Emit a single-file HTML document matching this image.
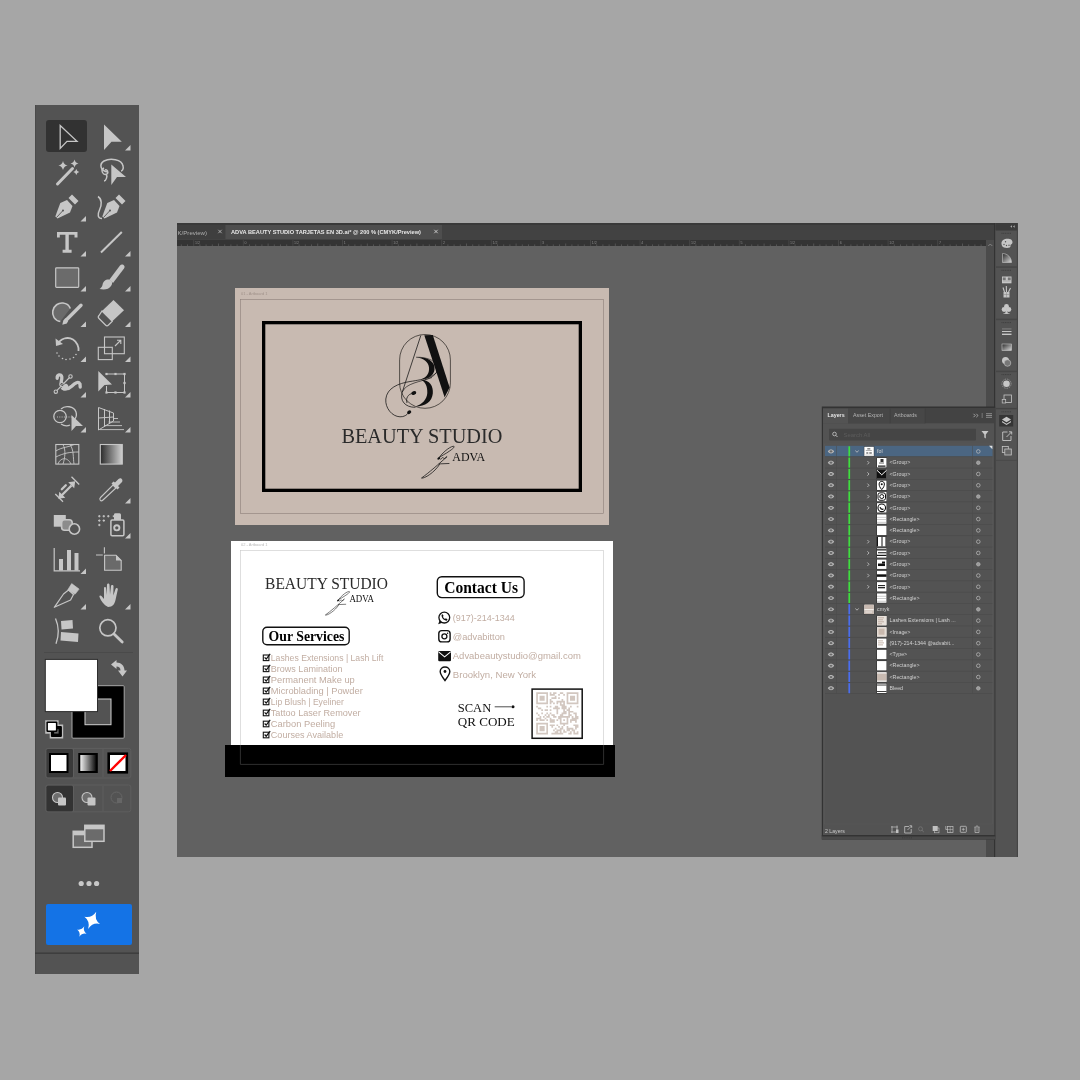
<!DOCTYPE html>
<html><head><meta charset="utf-8"><style>
html,body{margin:0;padding:0;width:1080px;height:1080px;overflow:hidden;background:#a6a6a6}
svg{display:block;will-change:transform}
svg{font-family:"Liberation Sans",sans-serif}
</style></head><body>
<svg width="1080" height="1080" viewBox="0 0 1080 1080">
<rect x="0" y="0" width="1080" height="1080" fill="#a6a6a6"/>
<rect x="35" y="105" width="104" height="869" fill="#535353"/>
<rect x="35" y="105" width="1" height="869" fill="#4a4a4a"/>
<rect x="46" y="120" width="41" height="32" rx="3" fill="#323232"/><path d="M125,150.5 L130.5,150.5 L130.5,145 Z" fill="#c6c6c6"/><path d="M80.5,221.5 L86,221.5 L86,216 Z" fill="#c6c6c6"/><path d="M80.5,256.5 L86,256.5 L86,251 Z" fill="#c6c6c6"/><path d="M125,256.5 L130.5,256.5 L130.5,251 Z" fill="#c6c6c6"/><path d="M80.5,291.5 L86,291.5 L86,286 Z" fill="#c6c6c6"/><path d="M125,291.5 L130.5,291.5 L130.5,286 Z" fill="#c6c6c6"/><path d="M80.5,327.0 L86,327.0 L86,321.5 Z" fill="#c6c6c6"/><path d="M125,327.0 L130.5,327.0 L130.5,321.5 Z" fill="#c6c6c6"/><path d="M80.5,362.0 L86,362.0 L86,356.5 Z" fill="#c6c6c6"/><path d="M125,362.0 L130.5,362.0 L130.5,356.5 Z" fill="#c6c6c6"/><path d="M80.5,397.5 L86,397.5 L86,392 Z" fill="#c6c6c6"/><path d="M125,397.5 L130.5,397.5 L130.5,392 Z" fill="#c6c6c6"/><path d="M80.5,432.5 L86,432.5 L86,427 Z" fill="#c6c6c6"/><path d="M125,432.5 L130.5,432.5 L130.5,427 Z" fill="#c6c6c6"/><path d="M125,503.5 L130.5,503.5 L130.5,498 Z" fill="#c6c6c6"/><path d="M125,538.5 L130.5,538.5 L130.5,533 Z" fill="#c6c6c6"/><path d="M80.5,574.0 L86,574.0 L86,568.5 Z" fill="#c6c6c6"/><path d="M80.5,609.5 L86,609.5 L86,604 Z" fill="#c6c6c6"/><path d="M125,609.5 L130.5,609.5 L130.5,604 Z" fill="#c6c6c6"/><path d="M60.2,125.5 L60.2,148.5 L67,141.4 L77,141.4 Z" fill="none" stroke="#c6c6c6" stroke-width="1.3" stroke-linejoin="miter"/><path d="M104,124.5 L104,150 L111.5,141.8 L121.8,141.8 Z" fill="#c6c6c6"/><path d="M57.5,184 L72.5,168.5" stroke="#c6c6c6" stroke-width="3" stroke-linecap="round"/><path d="M63,160.9 Q63.828,164.672 67.6,165.5 Q63.828,166.328 63,170.1 Q62.172,166.328 58.4,165.5 Q62.172,164.672 63,160.9 Z" fill="#c6c6c6"/><path d="M74.5,159.5 Q75.22,162.78 78.5,163.5 Q75.22,164.22 74.5,167.5 Q73.78,164.22 70.5,163.5 Q73.78,162.78 74.5,159.5 Z" fill="#c6c6c6"/><path d="M76.3,169 Q76.84,171.46 79.3,172 Q76.84,172.54 76.3,175 Q75.75999999999999,172.54 73.3,172 Q75.75999999999999,171.46 76.3,169 Z" fill="#c6c6c6"/><path d="M108,172 C100,171 99,164 104,161 C110,158 122,159 123,166 C124,169 122,171 121,171" fill="none" stroke="#c6c6c6" stroke-width="1.5"/><path d="M104,168 C100,170 103,176 107,174 C109,172 107,169 105,170 M106,174 C108,176 106,181 104,181" fill="none" stroke="#c6c6c6" stroke-width="1.4"/><path d="M111.3,164.5 L111.3,185 L117,177 L126,177 Z" fill="#c6c6c6"/><g transform="translate(0,0)"><path d="M55.3,216.5 L60.3,203 L67,200 L72.5,206 L70,212.5 L57.5,218.5 Z" fill="#c6c6c6"/><path d="M56.5,217.5 L63,210.5" stroke="#535353" stroke-width="0.9"/><circle cx="63" cy="210.5" r="1" fill="#535353"/><path d="M68.5,198 L72,194.5 L78.5,201 L75,204.5 Z" fill="#c6c6c6"/></g><g transform="translate(47,0)"><path d="M55.3,216.5 L60.3,203 L67,200 L72.5,206 L70,212.5 L57.5,218.5 Z" fill="#c6c6c6"/><path d="M56.5,217.5 L63,210.5" stroke="#535353" stroke-width="0.9"/><circle cx="63" cy="210.5" r="1" fill="#535353"/><path d="M68.5,198 L72,194.5 L78.5,201 L75,204.5 Z" fill="#c6c6c6"/></g><path d="M98,196.5 C102,199 102,205 99.5,210 C97,215 98,218.5 102,218.5" fill="none" stroke="#c6c6c6" stroke-width="1.5"/><path d="M57,232 L77.5,232 L77.5,237.5 L74.5,237.5 L74.5,234.7 L68.8,234.7 L68.8,249.8 L71.6,249.8 L71.6,252.7 L62.6,252.7 L62.6,249.8 L65.4,249.8 L65.4,234.7 L59.8,234.7 L59.8,237.5 L57,237.5 Z" fill="#c6c6c6"/><path d="M101,252.5 L121.8,232" stroke="#c6c6c6" stroke-width="2"/><rect x="55.7" y="267.8" width="23" height="19.6" rx="0.8" fill="#6b6b6b" stroke="#c6c6c6" stroke-width="1.2"/><path d="M109.5,279.5 L120,265.5 C122,263 126,265.5 124,268.5 L113,283 Z" fill="#c6c6c6"/><path d="M109.5,279.5 C106,279 103,281 102.5,285 C102,287 100.5,288.5 99.5,289 C104,290 109,289.5 111,286 C112.5,284 112.5,281.5 111,280.5 Z" fill="#c6c6c6"/><path d="M60.3,321.5 C54.5,320.5 52,315.5 52.8,311 C53.8,305.5 58.5,302.5 63,303 C66.5,303.4 69.3,305.5 70.3,308.5" fill="#6a6a6a" stroke="#c6c6c6" stroke-width="1.6"/><path d="M81,305.3 L66.8,319.5" stroke="#c6c6c6" stroke-width="3.4" stroke-linecap="round"/><path d="M65.4,318.1 L68.2,320.9 L66.8,323.4 L62.3,324.7 L63.3,320.4 Z" fill="#c6c6c6"/><path d="M113.5,300 L124,310.2 L112.3,321.3 L102,311 Z" fill="#c6c6c6"/><path d="M102,311 L112.3,321.3 L108.5,325 C107.5,326 106.5,326 105.5,325 L99,318.5 C98,317.5 98,316.5 99,315.5 Z" fill="none" stroke="#c6c6c6" stroke-width="1.2"/><path d="M57.5,345 C60,338 68,336.5 73,339.5 C77,342 79,347 78.5,351" fill="none" stroke="#c6c6c6" stroke-width="1.8"/><path d="M55.5,338.5 L56,346 L63,344 Z" fill="#c6c6c6"/><circle cx="57" cy="353" r="0.8" fill="#c6c6c6"/><circle cx="59" cy="356" r="0.8" fill="#c6c6c6"/><circle cx="62.5" cy="358.5" r="0.8" fill="#c6c6c6"/><circle cx="66" cy="359.5" r="0.8" fill="#c6c6c6"/><circle cx="70" cy="359" r="0.8" fill="#c6c6c6"/><circle cx="73.5" cy="357.5" r="0.8" fill="#c6c6c6"/><circle cx="76" cy="354.5" r="0.8" fill="#c6c6c6"/><rect x="104.5" y="337" width="19.8" height="16.7" fill="none" stroke="#c6c6c6" stroke-width="1.1"/><rect x="98.3" y="347.3" width="14" height="12.3" fill="none" stroke="#c6c6c6" stroke-width="1.1"/><path d="M115,346 L120.5,340.5 M117,340.3 L120.8,340.3 L120.8,344" fill="none" stroke="#c6c6c6" stroke-width="1.1"/><path d="M57.2,378.3 C56.8,374.8 61.3,373.3 61.8,377 C62.2,380.5 60,383 61.3,386.5 C62.8,389.8 68,389.8 72,386 C75,383 78.3,380.8 80,384 L80.2,387" fill="none" stroke="#c6c6c6" stroke-width="3.3" stroke-linecap="round"/><circle cx="64.8" cy="387" r="3.6" fill="#c6c6c6"/><path d="M55.8,391.7 L70.5,376.5" stroke="#535353" stroke-width="2.6"/><path d="M55.8,391.7 L70.5,376.5" stroke="#c6c6c6" stroke-width="1.1"/><circle cx="55.8" cy="391.7" r="1.7" fill="#535353" stroke="#c6c6c6" stroke-width="1.1"/><circle cx="70.5" cy="376.5" r="1.7" fill="#535353" stroke="#c6c6c6" stroke-width="1.1"/><circle cx="62" cy="384.5" r="2.1" fill="#535353" stroke="#c6c6c6" stroke-width="1"/><path d="M60.6,385.9 L63.4,383.1" stroke="#c6c6c6" stroke-width="1"/><path d="M98.3,371 L98.3,391.5 L104.5,385 L112,384.5 Z" fill="#c6c6c6"/><path d="M106.5,374 L124.5,374 L124.5,392.5 L106.5,392.5 L106.5,386" fill="none" stroke="#c6c6c6" stroke-width="1"/><rect x="105.4" y="372.9" width="2.2" height="2.2" fill="#c6c6c6"/><rect x="114.4" y="372.9" width="2.2" height="2.2" fill="#c6c6c6"/><rect x="123.4" y="372.9" width="2.2" height="2.2" fill="#c6c6c6"/><rect x="123.4" y="381.9" width="2.2" height="2.2" fill="#c6c6c6"/><rect x="105.4" y="391.4" width="2.2" height="2.2" fill="#c6c6c6"/><rect x="114.4" y="391.4" width="2.2" height="2.2" fill="#c6c6c6"/><rect x="123.4" y="391.4" width="2.2" height="2.2" fill="#c6c6c6"/><circle cx="60" cy="416.5" r="6.2" fill="none" stroke="#c6c6c6" stroke-width="1.3"/><path d="M61,409 C65,405 74,406 76,412 C77,415 76,418 74,420 M61,424 C64,426 68,426 70,425" fill="none" stroke="#c6c6c6" stroke-width="1.3"/><path d="M57,417 L73,417" stroke="#c6c6c6" stroke-width="0.9" stroke-dasharray="1,1.3"/><path d="M71.5,415 L71.5,431 L76,426 L83,426 Z" fill="#c6c6c6"/><path d="M98.5,407.5 L98.5,430 L113.5,421 L113.5,413 Z M98.5,418 L113.5,417 M104.5,409 L104.5,426.5 M109.5,410.5 L109.5,423.5" fill="none" stroke="#c6c6c6" stroke-width="1"/><path d="M113.5,418.5 L118,418.5" stroke="#c6c6c6" stroke-width="0.9"/><path d="M108.5,422 L120,422" stroke="#c6c6c6" stroke-width="0.9"/><path d="M104,425.6 L122,425.6" stroke="#c6c6c6" stroke-width="0.9"/><path d="M100,429.6 L124,429.6" stroke="#c6c6c6" stroke-width="0.9"/><rect x="55.8" y="444.5" width="23" height="19.6" fill="none" stroke="#c6c6c6" stroke-width="1.1"/><path d="M55.8,451 C62,447 70,447 74,444.5 M55.8,457 C64,453 70,452 78.8,452 M58,464 C60,458 67,456 71,464 M63,444.5 C66,450 65,458 63,464 M70,444.5 C74,450 73,458 74,464" fill="none" stroke="#c6c6c6" stroke-width="0.9"/><defs><linearGradient id="gtool" x1="0" x2="1"><stop offset="0" stop-color="#2a2a2a"/><stop offset="1" stop-color="#d0d0d0"/></linearGradient><linearGradient id="gsw" x1="0" x2="1"><stop offset="0" stop-color="#fff"/><stop offset="1" stop-color="#000"/></linearGradient><linearGradient id="gdark" x1="0" x2="1"><stop offset="0" stop-color="#2a2a2a"/><stop offset="1" stop-color="#e0e0e0"/></linearGradient></defs><rect x="100.3" y="444.5" width="22" height="19.6" fill="url(#gtool)" stroke="#c6c6c6" stroke-width="1.1"/><path d="M55.3,494 L63,501.7 M71.5,476.8 L79.2,484.5" stroke="#c6c6c6" stroke-width="1.3"/><path d="M61.5,495.5 L71.5,485.5" stroke="#c6c6c6" stroke-width="2.3"/><path d="M75.2,481.3 L68.2,482.3 L74.2,488.3 Z M58.3,498.7 L65.3,497.7 L59.3,491.7 Z" fill="#c6c6c6"/><path d="M61.8,489.2 L65.8,485.2" stroke="#c6c6c6" stroke-width="2.3" stroke-linecap="round"/><path d="M103,500 C100.5,502.5 99,499 100.5,497.5 L113,485 L116,488 Z" fill="none" stroke="#c6c6c6" stroke-width="1.1"/><path d="M111.5,483.5 L117.5,489.5 L119.5,487.5 L118,486 L121.5,482.5 C124,480 121,476.5 118.5,479 L115,482.5 L113.5,481.5 Z" fill="#c6c6c6"/><rect x="53.8" y="515" width="12" height="11.7" fill="#c6c6c6"/><rect x="61.6" y="519.7" width="10.6" height="10.5" rx="3" fill="#8c8c8c" stroke="#c6c6c6" stroke-width="1.6"/><circle cx="74.4" cy="529" r="5.2" fill="#535353" stroke="#c6c6c6" stroke-width="1.6"/><path d="M98.1,516.2 h2.4 M99.3,515.0 v2.4" stroke="#c6c6c6" stroke-width="1"/><path d="M102.6,516.2 h2.4 M103.8,515.0 v2.4" stroke="#c6c6c6" stroke-width="1"/><path d="M107.1,516.2 h2.4 M108.3,515.0 v2.4" stroke="#c6c6c6" stroke-width="1"/><path d="M98.1,520.6 h2.4 M99.3,519.4 v2.4" stroke="#c6c6c6" stroke-width="1"/><path d="M102.6,520.6 h2.4 M103.8,519.4 v2.4" stroke="#c6c6c6" stroke-width="1"/><path d="M98.1,525 h2.4 M99.3,523.8 v2.4" stroke="#c6c6c6" stroke-width="1"/><rect x="110.9" y="520" width="13" height="15.7" rx="1.2" fill="none" stroke="#c6c6c6" stroke-width="1.5"/><path d="M114,520 L114,514.5 Q114,513.3 115.5,513.3 L119.5,513.3 Q121,513.3 121,514.8 L121,520 Z M114,515 L112.3,516 L114,517.5 Z" fill="#c6c6c6"/><circle cx="116.8" cy="527.8" r="2.6" fill="none" stroke="#c6c6c6" stroke-width="1.9"/><path d="M54.2,548 L54.2,570.8 L80,570.8" fill="none" stroke="#c6c6c6" stroke-width="1.2"/><rect x="59" y="559" width="4" height="11.5" fill="#c6c6c6"/><rect x="67" y="550" width="4" height="20.5" fill="#c6c6c6"/><rect x="74.5" y="553" width="4" height="17.5" fill="#c6c6c6"/><path d="M104.4,547.3 L104.4,553.4 M96,555 L102.8,555" stroke="#c6c6c6" stroke-width="1.1"/><path d="M104.6,555.2 L116,555.2 L121.2,560.5 L121.2,570.3 L104.6,570.3 Z" fill="#6a6a6a" stroke="#c6c6c6" stroke-width="1.1"/><path d="M116,555 L116,560.5 L121.5,560.5 Z" fill="#c6c6c6"/><path d="M54.3,607.3 L63.5,594 L68.5,590 L73.5,594.5 L70.6,600 Z" fill="none" stroke="#c6c6c6" stroke-width="1.2" stroke-linejoin="round"/><path d="M71.7,583.6 L79.1,589.1 L75,594.3 L67.8,589.8 Z" fill="#c6c6c6" stroke="#c6c6c6" stroke-width="0.6" stroke-linejoin="round"/><path d="M108,607 C104,605 101,601 99.5,597 C99,595.5 100.5,595 101.5,596 L104,599 L104,588 C104,586.5 106,586.5 106,588 L106.5,595 L107,585 C107,583 109.5,583 109.5,585 L110,594.5 L111,586 C111,584.5 113.5,584.5 113.5,586 L113.3,595.5 L115.5,589 C116,587.5 118,588 117.8,589.5 L115.5,600 C114.5,604 113,607 108,607 Z" fill="#c6c6c6"/><path d="M55.5,618.5 C58.8,626 58.8,636 56,643.8" fill="none" stroke="#c6c6c6" stroke-width="1.3"/><path d="M61,621 L72.5,620 L73,628.5 L61.5,629.5 Z M61,632 L78.5,633.5 L78,642 L60.5,640.5 Z" fill="#c6c6c6"/><circle cx="107.9" cy="627.8" r="8.1" fill="none" stroke="#c6c6c6" stroke-width="1.7"/><path d="M114,634 L122.2,642" stroke="#c6c6c6" stroke-width="2.8" stroke-linecap="round"/><rect x="44" y="652" width="89" height="1" fill="#4a4a4a"/><rect x="72" y="685.7" width="52.2" height="52.5" rx="1" fill="#000" stroke="#a8a8a8" stroke-width="1"/><rect x="85" y="699" width="26" height="25.7" fill="#535353" stroke="#d0d0d0" stroke-width="1"/><rect x="45.3" y="659.4" width="52.2" height="52.2" fill="#fff" stroke="#2e2e2e" stroke-width="1"/><path d="M111,664.5 L116.5,660 L116.5,662.5 C121,662.5 124.5,665.5 124.5,670.5 L127,670.5 L122.5,676.5 L118,670.5 L120.5,670.5 C120.5,668 119,666.5 116.5,666.5 L116.5,669 Z" fill="#c6c6c6"/><path d="M45.2,720.2 L58.6,720.2 L58.6,724.6 L63.2,724.6 L63.2,738.4 L49.7,738.4 L49.7,733.7 L45.2,733.7 Z" fill="#bdbdbd"/><rect x="50.9" y="725.9" width="11" height="11" rx="1" fill="#000"/><rect x="54.2" y="729.2" width="4.4" height="4.4" fill="#666"/><rect x="46.4" y="721.4" width="11" height="10.6" rx="1.2" fill="#000"/><rect x="47.9" y="722.9" width="8" height="7.6" rx="0.4" fill="#fff"/><rect x="45.8" y="748.4" width="85" height="29.6" rx="2" fill="none" stroke="#5e5e5e" stroke-width="1"/><rect x="46.5" y="749" width="26.5" height="28.3" rx="1.5" fill="#3a3a3a"/><rect x="73" y="749" width="1" height="28.3" fill="#5e5e5e"/><rect x="102.5" y="749" width="1" height="28.3" fill="#5e5e5e"/><rect x="50" y="754" width="17.5" height="18" fill="#fff" stroke="#000" stroke-width="2"/><rect x="79.3" y="754" width="17.5" height="18" fill="url(#gsw)" stroke="#000" stroke-width="2"/><rect x="109" y="754" width="17.5" height="18" fill="#fff" stroke="#000" stroke-width="2"/><path d="M110,771 L126,755" stroke="#ff0000" stroke-width="2.4"/><rect x="108" y="753" width="19.5" height="20" fill="none" stroke="#000" stroke-width="1.2"/><rect x="45.8" y="785" width="85" height="26.8" rx="2" fill="none" stroke="#5e5e5e" stroke-width="1"/><rect x="46.5" y="785.7" width="26.5" height="25.5" rx="1.5" fill="#333"/><rect x="73" y="785.7" width="1" height="25.5" fill="#5e5e5e"/><rect x="102.5" y="785.7" width="1" height="25.5" fill="#5e5e5e"/><circle cx="57.5" cy="797.5" r="5" fill="#6e6e6e" stroke="#c6c6c6" stroke-width="1.1"/><rect x="58" y="797.5" width="8" height="8" rx="1" fill="#c6c6c6"/><circle cx="87.0" cy="797.5" r="5" fill="#6e6e6e" stroke="#c6c6c6" stroke-width="1.1"/><rect x="87.5" y="797.5" width="8" height="8" rx="1" fill="#c6c6c6"/><circle cx="116.5" cy="797.5" r="5.5" fill="none" stroke="#666" stroke-width="1"/><rect x="117" y="798" width="5" height="5" fill="#666"/><rect x="73.2" y="831.3" width="18.8" height="16" fill="#6b6b6b" stroke="#c6c6c6" stroke-width="1.5"/><rect x="73.2" y="831.3" width="18.8" height="4" fill="#c6c6c6"/><rect x="84.8" y="825.3" width="19.2" height="16" fill="#6b6b6b" stroke="#c6c6c6" stroke-width="1.5"/><rect x="84.8" y="825.3" width="19.2" height="4" fill="#c6c6c6"/><circle cx="81.2" cy="883.5" r="2.6" fill="#c8c8c8"/><circle cx="89" cy="883.5" r="2.6" fill="#c8c8c8"/><circle cx="96.6" cy="883.5" r="2.6" fill="#c8c8c8"/><rect x="46" y="904" width="86" height="41" rx="2" fill="#1473e6"/><path transform="rotate(25 92.2 920.3)" d="M92.2,910.8 Q93.49000000000001,918.875 100.8,920.3 Q93.49000000000001,921.7249999999999 92.2,929.8 Q90.91,921.7249999999999 83.60000000000001,920.3 Q90.91,918.875 92.2,910.8 Z" fill="#fff"/><path transform="rotate(25 81.8 931.6)" d="M81.8,925.8000000000001 Q82.58,930.73 87.0,931.6 Q82.58,932.47 81.8,937.4 Q81.02,932.47 76.6,931.6 Q81.02,930.73 81.8,925.8000000000001 Z" fill="#fff"/><rect x="35" y="952.5" width="104" height="1.3" fill="#3a3a3a"/>
<rect x="177" y="223" width="841" height="634" fill="#616161"/><rect x="177" y="223" width="818" height="17" fill="#424242"/><rect x="177" y="223" width="818" height="2" fill="#393939"/><rect x="177" y="225" width="48.5" height="14" fill="#3f3f3f"/><rect x="225.5" y="225" width="216.5" height="14" fill="#4e4e4e"/><text x="207" y="234.5" font-size="6.1" fill="#b0b0b0" text-anchor="end">K/Preview)</text><path d="M218.3,229.8 L221.7,233.2 M221.7,229.8 L218.3,233.2" stroke="#c0c0c0" stroke-width="0.8"/><text x="231" y="234.3" font-size="5.6" font-weight="bold" fill="#e8e8e8" textLength="190" lengthAdjust="spacingAndGlyphs">ADVA BEAUTY STUDIO TARJETAS EN 3D.ai* @ 200 % (CMYK/Preview)</text><path d="M434.3,229.8 L437.7,233.2 M437.7,229.8 L434.3,233.2" stroke="#d0d0d0" stroke-width="0.9"/><rect x="177" y="240" width="809" height="6" fill="#343434"/><path d="M181.30,244.4 L181.30,246 M187.50,244.4 L187.50,246 M199.90,244.4 L199.90,246 M206.10,244.4 L206.10,246 M212.30,244.4 L212.30,246 M218.50,243.5 L218.50,246 M224.70,244.4 L224.70,246 M230.90,244.4 L230.90,246 M237.10,244.4 L237.10,246 M249.50,244.4 L249.50,246 M255.70,244.4 L255.70,246 M261.90,244.4 L261.90,246 M268.10,243.5 L268.10,246 M274.30,244.4 L274.30,246 M280.50,244.4 L280.50,246 M286.70,244.4 L286.70,246 M299.10,244.4 L299.10,246 M305.30,244.4 L305.30,246 M311.50,244.4 L311.50,246 M317.70,243.5 L317.70,246 M323.90,244.4 L323.90,246 M330.10,244.4 L330.10,246 M336.30,244.4 L336.30,246 M348.70,244.4 L348.70,246 M354.90,244.4 L354.90,246 M361.10,244.4 L361.10,246 M367.30,243.5 L367.30,246 M373.50,244.4 L373.50,246 M379.70,244.4 L379.70,246 M385.90,244.4 L385.90,246 M398.30,244.4 L398.30,246 M404.50,244.4 L404.50,246 M410.70,244.4 L410.70,246 M416.90,243.5 L416.90,246 M423.10,244.4 L423.10,246 M429.30,244.4 L429.30,246 M435.50,244.4 L435.50,246 M447.90,244.4 L447.90,246 M454.10,244.4 L454.10,246 M460.30,244.4 L460.30,246 M466.50,243.5 L466.50,246 M472.70,244.4 L472.70,246 M478.90,244.4 L478.90,246 M485.10,244.4 L485.10,246 M497.50,244.4 L497.50,246 M503.70,244.4 L503.70,246 M509.90,244.4 L509.90,246 M516.10,243.5 L516.10,246 M522.30,244.4 L522.30,246 M528.50,244.4 L528.50,246 M534.70,244.4 L534.70,246 M547.10,244.4 L547.10,246 M553.30,244.4 L553.30,246 M559.50,244.4 L559.50,246 M565.70,243.5 L565.70,246 M571.90,244.4 L571.90,246 M578.10,244.4 L578.10,246 M584.30,244.4 L584.30,246 M596.70,244.4 L596.70,246 M602.90,244.4 L602.90,246 M609.10,244.4 L609.10,246 M615.30,243.5 L615.30,246 M621.50,244.4 L621.50,246 M627.70,244.4 L627.70,246 M633.90,244.4 L633.90,246 M646.30,244.4 L646.30,246 M652.50,244.4 L652.50,246 M658.70,244.4 L658.70,246 M664.90,243.5 L664.90,246 M671.10,244.4 L671.10,246 M677.30,244.4 L677.30,246 M683.50,244.4 L683.50,246 M695.90,244.4 L695.90,246 M702.10,244.4 L702.10,246 M708.30,244.4 L708.30,246 M714.50,243.5 L714.50,246 M720.70,244.4 L720.70,246 M726.90,244.4 L726.90,246 M733.10,244.4 L733.10,246 M745.50,244.4 L745.50,246 M751.70,244.4 L751.70,246 M757.90,244.4 L757.90,246 M764.10,243.5 L764.10,246 M770.30,244.4 L770.30,246 M776.50,244.4 L776.50,246 M782.70,244.4 L782.70,246 M795.10,244.4 L795.10,246 M801.30,244.4 L801.30,246 M807.50,244.4 L807.50,246 M813.70,243.5 L813.70,246 M819.90,244.4 L819.90,246 M826.10,244.4 L826.10,246 M832.30,244.4 L832.30,246 M844.70,244.4 L844.70,246 M850.90,244.4 L850.90,246 M857.10,244.4 L857.10,246 M863.30,243.5 L863.30,246 M869.50,244.4 L869.50,246 M875.70,244.4 L875.70,246 M881.90,244.4 L881.90,246 M894.30,244.4 L894.30,246 M900.50,244.4 L900.50,246 M906.70,244.4 L906.70,246 M912.90,243.5 L912.90,246 M919.10,244.4 L919.10,246 M925.30,244.4 L925.30,246 M931.50,244.4 L931.50,246 M943.90,244.4 L943.90,246 M950.10,244.4 L950.10,246 M956.30,244.4 L956.30,246 M962.50,243.5 L962.50,246 M968.70,244.4 L968.70,246 M974.90,244.4 L974.90,246 M981.10,244.4 L981.10,246" stroke="#6a6a6a" stroke-width="0.6"/><path d="M193.70,240 L193.70,246 M243.30,240 L243.30,246 M292.90,240 L292.90,246 M342.50,240 L342.50,246 M392.10,240 L392.10,246 M441.70,240 L441.70,246 M491.30,240 L491.30,246 M540.90,240 L540.90,246 M590.50,240 L590.50,246 M640.10,240 L640.10,246 M689.70,240 L689.70,246 M739.30,240 L739.30,246 M788.90,240 L788.90,246 M838.50,240 L838.50,246 M888.10,240 L888.10,246 M937.70,240 L937.70,246" stroke="#505050" stroke-width="0.6"/><text x="194.90" y="244.2" font-size="3.6" fill="#8a8a8a">1/2</text><text x="244.50" y="244.2" font-size="3.6" fill="#8a8a8a">0</text><text x="294.10" y="244.2" font-size="3.6" fill="#8a8a8a">1/2</text><text x="343.70" y="244.2" font-size="3.6" fill="#8a8a8a">1</text><text x="393.30" y="244.2" font-size="3.6" fill="#8a8a8a">1/2</text><text x="442.90" y="244.2" font-size="3.6" fill="#8a8a8a">2</text><text x="492.50" y="244.2" font-size="3.6" fill="#8a8a8a">1/2</text><text x="542.10" y="244.2" font-size="3.6" fill="#8a8a8a">3</text><text x="591.70" y="244.2" font-size="3.6" fill="#8a8a8a">1/2</text><text x="641.30" y="244.2" font-size="3.6" fill="#8a8a8a">4</text><text x="690.90" y="244.2" font-size="3.6" fill="#8a8a8a">1/2</text><text x="740.50" y="244.2" font-size="3.6" fill="#8a8a8a">5</text><text x="790.10" y="244.2" font-size="3.6" fill="#8a8a8a">1/2</text><text x="839.70" y="244.2" font-size="3.6" fill="#8a8a8a">6</text><text x="889.30" y="244.2" font-size="3.6" fill="#8a8a8a">1/2</text><text x="938.90" y="244.2" font-size="3.6" fill="#8a8a8a">7</text><rect x="986" y="240" width="8.5" height="617" fill="#4b4b4b"/><path d="M988.3,246 L990.3,244 L992.3,246" fill="none" stroke="#9a9a9a" stroke-width="0.7"/><rect x="994" y="223" width="1.4" height="634" fill="#333"/><rect x="995.4" y="223" width="22.6" height="634" fill="#4b4b4b"/><rect x="995.4" y="223" width="22.6" height="7.3" fill="#3c3c3c"/><path d="M1010.3,226.5 L1012,225.3 L1012,227.7 Z M1013,226.5 L1014.7,225.3 L1014.7,227.7 Z" fill="#aaa"/><rect x="1017" y="223" width="1" height="634" fill="#444"/><rect x="996" y="231" width="20.8" height="36" fill="#535353"/><rect x="996" y="266.4" width="20.8" height="1" fill="#434343"/><path d="M1001.5,233.3 L1011.5,233.3" stroke="#3e3e3e" stroke-width="1" stroke-dasharray="1,0.7"/><rect x="996" y="268" width="20.8" height="51.30000000000001" fill="#535353"/><rect x="996" y="318.7" width="20.8" height="1" fill="#434343"/><path d="M1001.5,270.3 L1011.5,270.3" stroke="#3e3e3e" stroke-width="1" stroke-dasharray="1,0.7"/><rect x="996" y="320.3" width="20.8" height="51.0" fill="#535353"/><rect x="996" y="370.7" width="20.8" height="1" fill="#434343"/><path d="M1001.5,322.6 L1011.5,322.6" stroke="#3e3e3e" stroke-width="1" stroke-dasharray="1,0.7"/><rect x="996" y="372.3" width="20.8" height="36.19999999999999" fill="#535353"/><rect x="996" y="407.9" width="20.8" height="1" fill="#434343"/><path d="M1001.5,374.6 L1011.5,374.6" stroke="#3e3e3e" stroke-width="1" stroke-dasharray="1,0.7"/><rect x="996" y="409.5" width="20.8" height="51.0" fill="#535353"/><rect x="996" y="459.9" width="20.8" height="1" fill="#434343"/><path d="M1001.5,411.8 L1011.5,411.8" stroke="#3e3e3e" stroke-width="1" stroke-dasharray="1,0.7"/><rect x="996" y="460.5" width="20.8" height="396.5" fill="#535353"/><path d="M1001.5,244 C1001,240 1005,238.3 1008.5,238.7 C1012,239 1013,241.5 1012.3,243.3 C1011.8,244.3 1010,244.5 1010.5,246 C1011,247.5 1008,248.3 1005,247.8 C1002.5,247.4 1001.8,245.8 1001.5,244 Z" fill="#c6c6c6"/><circle cx="1004" cy="244.5" r="0.7" fill="#535353"/><circle cx="1006.5" cy="245.5" r="0.7" fill="#535353"/><circle cx="1009" cy="245.3" r="0.7" fill="#535353"/><circle cx="1005.5" cy="241.7" r="0.7" fill="#535353"/><defs><linearGradient id="qg" x1="0" y1="0" x2="1" y2="1"><stop offset="0" stop-color="#2a2a2a"/><stop offset="1" stop-color="#d8d8d8"/></linearGradient></defs><path d="M1002.5,253.5 L1002.5,262.5 L1011.5,262.5 C1011.5,257.5 1007.5,253.5 1002.5,253.5 Z" fill="url(#qg)" stroke="#c6c6c6" stroke-width="0.6"/><rect x="1002" y="276.5" width="9.5" height="6.8" fill="#c6c6c6"/><path d="M1003,277.7 h2.5 v2.2 h-2.5 Z M1008,277.7 h2.5 v2.2 h-2.5 Z M1003,281 h7.5" fill="#777" stroke="#777" stroke-width="0.4"/><rect x="1003.5" y="292" width="6" height="5.5" fill="#c6c6c6"/><path d="M1004.5,292 L1003,287.5 M1006.5,292 L1006.3,286 M1008.5,292 L1010.5,288" stroke="#c6c6c6" stroke-width="1.1"/><path d="M1003.5,294.5 h6 M1006.5,292 v5.5" stroke="#777" stroke-width="0.4"/><circle cx="1006.5" cy="306.3" r="2.4" fill="#c6c6c6"/><circle cx="1004.1" cy="309.5" r="2.4" fill="#c6c6c6"/><circle cx="1008.9" cy="309.5" r="2.4" fill="#c6c6c6"/><path d="M1006.5,308 L1005.5,313.5 L1007.5,313.5 Z M1003.5,313.5 h6" stroke="#c6c6c6" stroke-width="0.7" fill="#c6c6c6"/><rect x="1002" y="328.3" width="9.5" height="1.2" fill="#7a7a7a"/><rect x="1002" y="331" width="9.5" height="1" fill="#c6c6c6"/><rect x="1002" y="333.6" width="9.5" height="1.4" fill="#c6c6c6"/><rect x="1002" y="344" width="9.5" height="6.5" fill="url(#qg)" stroke="#c6c6c6" stroke-width="0.6"/><circle cx="1005.5" cy="360.5" r="3.5" fill="#c6c6c6"/><circle cx="1007.5" cy="363" r="3.3" fill="#777" stroke="#c6c6c6" stroke-width="0.6"/><circle cx="1006.5" cy="383.7" r="3.3" fill="#c6c6c6"/><circle cx="1006.5" cy="383.7" r="4.6" fill="none" stroke="#c6c6c6" stroke-width="0.7" stroke-dasharray="0.8,1"/><rect x="1004" y="395" width="7.5" height="7.5" fill="none" stroke="#c6c6c6" stroke-width="0.8"/><rect x="1002.2" y="399.5" width="3.5" height="3.5" fill="#535353" stroke="#c6c6c6" stroke-width="0.7"/><rect x="999.2" y="415" width="14" height="11.5" fill="#353535"/><path d="M1006.5,416.8 L1011,419.5 L1006.5,422.2 L1002,419.5 Z" fill="#c6c6c6"/><path d="M1002,421 L1006.5,423.7 L1011,421 L1011,422.3 L1006.5,425 L1002,422.3 Z" fill="#c6c6c6"/><path d="M1007.5,432 L1002.7,432 L1002.7,440.5 L1011,440.5 L1011,436" fill="none" stroke="#c6c6c6" stroke-width="0.9"/><path d="M1006.5,437 L1011.5,432 M1009,431.8 L1011.7,431.8 L1011.7,434.5" fill="none" stroke="#c6c6c6" stroke-width="0.9"/><rect x="1002.3" y="446.5" width="6" height="6" fill="none" stroke="#c6c6c6" stroke-width="0.8"/><rect x="1004.8" y="449" width="6.5" height="6" fill="#666" stroke="#c6c6c6" stroke-width="0.8"/>
<rect x="235" y="288" width="374" height="237" fill="#c8bab1"/><text x="241" y="294.8" font-size="4" fill="#a0928a">01 - Artboard 1</text><rect x="240.5" y="299.5" width="363" height="214" fill="none" stroke="#8c7f78" stroke-width="0.6"/><rect x="263.65" y="322.65" width="316.7" height="167.7" fill="none" stroke="#000" stroke-width="3.3"/><rect x="399.6" y="334.5" width="50.8" height="73.8" rx="25.4" ry="25.4" fill="none" stroke="#2e2926" stroke-width="0.75"/><path d="M424.3,335.3 L432.8,334.9 L449.6,387.5 L444.6,397.2 Z" fill="#111"/><path d="M420.8,335.5 L402.3,392" stroke="#111" stroke-width="0.75"/><path d="M416,357.2 C427,356.5 435.3,361 434.5,369.5 C434,375 429,378.8 421.5,379.3 C427,377 429.5,373 429,367.5 C428.5,362 424,358.3 416,357.2 Z" fill="#111"/><path d="M416,357.2 C428,357 437.5,361 437.3,369 C437.2,374 432,378 425,379.5" fill="none" stroke="#111" stroke-width="0.55"/><path d="M421,379.8 C430,380 433.5,386.5 432.8,393.5 C432,401.5 425.5,406.5 415.5,406.5 C422,404.5 427,399.5 427.3,393 C427.6,386.5 425.5,382 421,379.8 Z" fill="#111"/><path d="M438,369 C437,376.5 424,379.5 410,381.5 C398,383.5 387,388 385.8,399 C385,408 392,416.5 400,416.8 C404,417 407,415 408.5,412.8" fill="none" stroke="#111" stroke-width="0.75"/><path d="M432,377.5 C420,382 406,383 402.3,392" fill="none" stroke="#111" stroke-width="0.65"/><path d="M402.3,392 C399.5,400.5 405,407.5 415.5,407.3" fill="none" stroke="#111" stroke-width="0.75"/><path d="M413,393.3 C408,393.8 405.5,398.5 407,403" fill="none" stroke="#111" stroke-width="0.75"/><ellipse cx="413.8" cy="393" rx="2.5" ry="1.9" transform="rotate(-15 413.8 393)" fill="#111"/><ellipse cx="409.2" cy="412.2" rx="2.2" ry="1.7" transform="rotate(-35 409.2 412.2)" fill="#111"/><text x="341.4" y="443.1" font-size="22" style="font-family:'Liberation Serif',serif" fill="#2a2a2a" textLength="161" lengthAdjust="spacingAndGlyphs">BEAUTY STUDIO</text><text x="452.3" y="461.1" font-size="12.7" style="font-family:'Liberation Serif',serif" fill="#111" textLength="32.9" lengthAdjust="spacingAndGlyphs">ADVA</text><path d="M438.30,458.80 C441.00,454.00 449.00,447.00 453.00,446.30 C456.00,446.00 454.00,449.00 439.80,457.00 M440.80,459.30 C442.00,457.50 443.00,457.00 443.50,458.20 C444.00,459.20 445.00,458.30 446.80,456.80 M446.80,456.80 C440.00,463.00 428.00,473.50 421.50,478.00 C424.00,479.00 434.50,472.50 439.50,464.50 M439.20,463.90 L449.00,463.50" fill="none" stroke="#111" stroke-width="0.75" stroke-linecap="round"/><ellipse cx="438.80" cy="458.30" rx="1.60" ry="1.10" transform="rotate(-35 438.80 458.30)" fill="#111"/><rect x="231" y="541" width="382" height="204" fill="#ffffff"/><text x="241" y="546.3" font-size="4" fill="#b8b8b8">02 - Artboard 1</text><rect x="240.4" y="550.3" width="363.2" height="214.1" fill="none" stroke="#c9c9c9" stroke-width="0.6"/><rect x="225" y="745" width="390" height="32" fill="#000"/><path d="M240.4,745 L240.4,764.4 L603.6,764.4 L603.6,745" fill="none" stroke="#4e4e4e" stroke-width="0.6"/><text x="265.1" y="588.6" font-size="16.6" style="font-family:'Liberation Serif',serif" fill="#2a2a2a" textLength="122.8" lengthAdjust="spacingAndGlyphs">BEAUTY STUDIO</text><text x="349.4" y="601.9" font-size="9.8" style="font-family:'Liberation Serif',serif" fill="#111" textLength="24.6" lengthAdjust="spacingAndGlyphs">ADVA</text><path d="M337.80,600.79 C339.80,597.24 345.72,592.06 348.68,591.54 C350.90,591.32 349.42,593.54 338.91,599.46 M339.65,601.16 C340.54,599.83 341.28,599.46 341.65,600.35 C342.02,601.09 342.76,600.42 344.09,599.31 M344.09,599.31 C339.06,603.90 330.18,611.67 325.37,615.00 C327.22,615.74 334.99,610.93 338.69,605.01 M338.47,604.57 L345.72,604.27" fill="none" stroke="#111" stroke-width="0.55" stroke-linecap="round"/><ellipse cx="338.17" cy="600.42" rx="1.18" ry="0.81" transform="rotate(-35 338.17 600.42)" fill="#111"/><rect x="262.8" y="627.3" width="86.4" height="17.4" rx="4.2" fill="none" stroke="#111" stroke-width="1.4"/><text x="268.6" y="640.8" font-size="14.8" font-weight="bold" style="font-family:'Liberation Serif',serif" fill="#000" textLength="75.8" lengthAdjust="spacingAndGlyphs">Our Services</text><rect x="263.3" y="655.00" width="5.6" height="5.6" fill="none" stroke="#111" stroke-width="1.1"/><path d="M264.6,657.30 L266.2,659.00 L270.2,653.80" fill="none" stroke="#111" stroke-width="1.2"/><text x="270.8" y="660.60" font-size="9" style="font-family:'Liberation Sans',sans-serif" fill="#c1ada2" textLength="112.5" lengthAdjust="spacingAndGlyphs">Lashes Extensions | Lash Lift</text><rect x="263.3" y="666.03" width="5.6" height="5.6" fill="none" stroke="#111" stroke-width="1.1"/><path d="M264.6,668.33 L266.2,670.03 L270.2,664.83" fill="none" stroke="#111" stroke-width="1.2"/><text x="270.8" y="671.63" font-size="9" style="font-family:'Liberation Sans',sans-serif" fill="#c1ada2" textLength="71.7" lengthAdjust="spacingAndGlyphs">Brows Lamination</text><rect x="263.3" y="677.06" width="5.6" height="5.6" fill="none" stroke="#111" stroke-width="1.1"/><path d="M264.6,679.36 L266.2,681.06 L270.2,675.86" fill="none" stroke="#111" stroke-width="1.2"/><text x="270.8" y="682.66" font-size="9" style="font-family:'Liberation Sans',sans-serif" fill="#c1ada2" textLength="84" lengthAdjust="spacingAndGlyphs">Permanent Make up</text><rect x="263.3" y="688.09" width="5.6" height="5.6" fill="none" stroke="#111" stroke-width="1.1"/><path d="M264.6,690.39 L266.2,692.09 L270.2,686.89" fill="none" stroke="#111" stroke-width="1.2"/><text x="270.8" y="693.69" font-size="9" style="font-family:'Liberation Sans',sans-serif" fill="#c1ada2" textLength="92" lengthAdjust="spacingAndGlyphs">Microblading | Powder</text><rect x="263.3" y="699.12" width="5.6" height="5.6" fill="none" stroke="#111" stroke-width="1.1"/><path d="M264.6,701.42 L266.2,703.12 L270.2,697.92" fill="none" stroke="#111" stroke-width="1.2"/><text x="270.8" y="704.72" font-size="9" style="font-family:'Liberation Sans',sans-serif" fill="#c1ada2" textLength="73" lengthAdjust="spacingAndGlyphs">Lip Blush | Eyeliner</text><rect x="263.3" y="710.15" width="5.6" height="5.6" fill="none" stroke="#111" stroke-width="1.1"/><path d="M264.6,712.45 L266.2,714.15 L270.2,708.95" fill="none" stroke="#111" stroke-width="1.2"/><text x="270.8" y="715.75" font-size="9" style="font-family:'Liberation Sans',sans-serif" fill="#c1ada2" textLength="89.7" lengthAdjust="spacingAndGlyphs">Tattoo Laser Remover</text><rect x="263.3" y="721.18" width="5.6" height="5.6" fill="none" stroke="#111" stroke-width="1.1"/><path d="M264.6,723.48 L266.2,725.18 L270.2,719.98" fill="none" stroke="#111" stroke-width="1.2"/><text x="270.8" y="726.78" font-size="9" style="font-family:'Liberation Sans',sans-serif" fill="#c1ada2" textLength="64.3" lengthAdjust="spacingAndGlyphs">Carbon Peeling</text><rect x="263.3" y="732.21" width="5.6" height="5.6" fill="none" stroke="#111" stroke-width="1.1"/><path d="M264.6,734.51 L266.2,736.21 L270.2,731.01" fill="none" stroke="#111" stroke-width="1.2"/><text x="270.8" y="737.81" font-size="9" style="font-family:'Liberation Sans',sans-serif" fill="#c1ada2" textLength="72.4" lengthAdjust="spacingAndGlyphs">Courses Available</text><rect x="437.3" y="576.7" width="86.8" height="20.9" rx="4.5" fill="none" stroke="#111" stroke-width="1.4"/><text x="444.2" y="592.8" font-size="17.5" font-weight="bold" style="font-family:'Liberation Serif',serif" fill="#000" textLength="73.9" lengthAdjust="spacingAndGlyphs">Contact Us</text><text x="452.8" y="620.7" font-size="9.9" style="font-family:'Liberation Sans',sans-serif" fill="#c1ada2" textLength="61.9" lengthAdjust="spacingAndGlyphs">(917)-214-1344</text><text x="452.8" y="639.7" font-size="9.9" style="font-family:'Liberation Sans',sans-serif" fill="#c1ada2" textLength="52.2" lengthAdjust="spacingAndGlyphs">@advabitton</text><text x="452.8" y="658.9" font-size="9.9" style="font-family:'Liberation Sans',sans-serif" fill="#c1ada2" textLength="128" lengthAdjust="spacingAndGlyphs">Advabeautystudio@gmail.com</text><text x="452.8" y="678.3" font-size="9.9" style="font-family:'Liberation Sans',sans-serif" fill="#c1ada2" textLength="83.2" lengthAdjust="spacingAndGlyphs">Brooklyn, New York</text><circle cx="444.3" cy="617.6" r="5.4" fill="none" stroke="#111" stroke-width="1.3"/><path d="M438.2,624.3 L439.6,620.3 L442.3,622.8 Z" fill="#111"/><path d="M441.6,614.8 C441.2,617.5 443.5,620.5 446.8,620.7 L447.5,619.3 L445.8,618.3 L445,619 C444,618.5 443.3,617.6 442.9,616.7 L443.6,616 L442.7,614.3 Z" fill="#111"/><rect x="438.8" y="630.6" width="11.3" height="11.3" rx="3" fill="none" stroke="#111" stroke-width="1.4"/><circle cx="444.4" cy="636.3" r="2.5" fill="none" stroke="#111" stroke-width="1.3"/><circle cx="447.6" cy="633.2" r="0.7" fill="#111"/><rect x="438.2" y="651" width="12.8" height="10.3" rx="1.2" fill="#111"/><path d="M438.6,651.8 L444.6,656.8 L450.6,651.8" fill="none" stroke="#fff" stroke-width="1.1"/><path d="M445,680.5 C441.5,676 440.2,673.5 440.2,671.5 C440.2,668.7 442.4,667 445,667 C447.6,667 449.8,668.7 449.8,671.5 C449.8,673.5 448.5,676 445,680.5 Z" fill="none" stroke="#111" stroke-width="1.4"/><circle cx="445" cy="671.5" r="1.4" fill="#111"/><text x="457.8" y="711.8" font-size="13.2" style="font-family:'Liberation Serif',serif" fill="#111" textLength="33.4" lengthAdjust="spacingAndGlyphs">SCAN</text><text x="457.8" y="725.6" font-size="13.2" style="font-family:'Liberation Serif',serif" fill="#111" textLength="57" lengthAdjust="spacingAndGlyphs">QR CODE</text><path d="M494.7,706.8 L511.5,706.8" stroke="#222" stroke-width="0.8"/><circle cx="513" cy="706.8" r="1.5" fill="#111"/><rect x="532.1" y="689.1" width="50.1" height="49.2" fill="#fff" stroke="#111" stroke-width="1.5"/><path d="M536.20,692.30h1.69v1.69h-1.69zM537.89,692.30h1.69v1.69h-1.69zM539.58,692.30h1.69v1.69h-1.69zM541.27,692.30h1.69v1.69h-1.69zM542.96,692.30h1.69v1.69h-1.69zM544.65,692.30h1.69v1.69h-1.69zM546.34,692.30h1.69v1.69h-1.69zM549.72,692.30h1.69v1.69h-1.69zM553.10,692.30h1.69v1.69h-1.69zM554.79,692.30h1.69v1.69h-1.69zM559.86,692.30h1.69v1.69h-1.69zM561.55,692.30h1.69v1.69h-1.69zM566.62,692.30h1.69v1.69h-1.69zM568.31,692.30h1.69v1.69h-1.69zM570.00,692.30h1.69v1.69h-1.69zM571.69,692.30h1.69v1.69h-1.69zM573.38,692.30h1.69v1.69h-1.69zM575.07,692.30h1.69v1.69h-1.69zM576.76,692.30h1.69v1.69h-1.69zM536.20,693.99h1.69v1.69h-1.69zM546.34,693.99h1.69v1.69h-1.69zM549.72,693.99h1.69v1.69h-1.69zM551.41,693.99h1.69v1.69h-1.69zM553.10,693.99h1.69v1.69h-1.69zM558.17,693.99h1.69v1.69h-1.69zM563.24,693.99h1.69v1.69h-1.69zM566.62,693.99h1.69v1.69h-1.69zM576.76,693.99h1.69v1.69h-1.69zM536.20,695.68h1.69v1.69h-1.69zM539.58,695.68h1.69v1.69h-1.69zM541.27,695.68h1.69v1.69h-1.69zM542.96,695.68h1.69v1.69h-1.69zM546.34,695.68h1.69v1.69h-1.69zM554.79,695.68h1.69v1.69h-1.69zM566.62,695.68h1.69v1.69h-1.69zM570.00,695.68h1.69v1.69h-1.69zM571.69,695.68h1.69v1.69h-1.69zM573.38,695.68h1.69v1.69h-1.69zM576.76,695.68h1.69v1.69h-1.69zM536.20,697.37h1.69v1.69h-1.69zM539.58,697.37h1.69v1.69h-1.69zM541.27,697.37h1.69v1.69h-1.69zM542.96,697.37h1.69v1.69h-1.69zM546.34,697.37h1.69v1.69h-1.69zM551.41,697.37h1.69v1.69h-1.69zM553.10,697.37h1.69v1.69h-1.69zM554.79,697.37h1.69v1.69h-1.69zM558.17,697.37h1.69v1.69h-1.69zM566.62,697.37h1.69v1.69h-1.69zM570.00,697.37h1.69v1.69h-1.69zM571.69,697.37h1.69v1.69h-1.69zM573.38,697.37h1.69v1.69h-1.69zM576.76,697.37h1.69v1.69h-1.69zM536.20,699.06h1.69v1.69h-1.69zM539.58,699.06h1.69v1.69h-1.69zM541.27,699.06h1.69v1.69h-1.69zM542.96,699.06h1.69v1.69h-1.69zM546.34,699.06h1.69v1.69h-1.69zM549.72,699.06h1.69v1.69h-1.69zM561.55,699.06h1.69v1.69h-1.69zM566.62,699.06h1.69v1.69h-1.69zM570.00,699.06h1.69v1.69h-1.69zM571.69,699.06h1.69v1.69h-1.69zM573.38,699.06h1.69v1.69h-1.69zM576.76,699.06h1.69v1.69h-1.69zM536.20,700.75h1.69v1.69h-1.69zM546.34,700.75h1.69v1.69h-1.69zM549.72,700.75h1.69v1.69h-1.69zM551.41,700.75h1.69v1.69h-1.69zM556.48,700.75h1.69v1.69h-1.69zM558.17,700.75h1.69v1.69h-1.69zM559.86,700.75h1.69v1.69h-1.69zM561.55,700.75h1.69v1.69h-1.69zM563.24,700.75h1.69v1.69h-1.69zM566.62,700.75h1.69v1.69h-1.69zM576.76,700.75h1.69v1.69h-1.69zM536.20,702.44h1.69v1.69h-1.69zM537.89,702.44h1.69v1.69h-1.69zM539.58,702.44h1.69v1.69h-1.69zM541.27,702.44h1.69v1.69h-1.69zM542.96,702.44h1.69v1.69h-1.69zM544.65,702.44h1.69v1.69h-1.69zM546.34,702.44h1.69v1.69h-1.69zM549.72,702.44h1.69v1.69h-1.69zM553.10,702.44h1.69v1.69h-1.69zM556.48,702.44h1.69v1.69h-1.69zM559.86,702.44h1.69v1.69h-1.69zM563.24,702.44h1.69v1.69h-1.69zM566.62,702.44h1.69v1.69h-1.69zM568.31,702.44h1.69v1.69h-1.69zM570.00,702.44h1.69v1.69h-1.69zM571.69,702.44h1.69v1.69h-1.69zM573.38,702.44h1.69v1.69h-1.69zM575.07,702.44h1.69v1.69h-1.69zM576.76,702.44h1.69v1.69h-1.69zM559.86,704.13h1.69v1.69h-1.69zM561.55,704.13h1.69v1.69h-1.69zM563.24,704.13h1.69v1.69h-1.69zM536.20,705.82h1.69v1.69h-1.69zM546.34,705.82h1.69v1.69h-1.69zM549.72,705.82h1.69v1.69h-1.69zM554.79,705.82h1.69v1.69h-1.69zM556.48,705.82h1.69v1.69h-1.69zM561.55,705.82h1.69v1.69h-1.69zM563.24,705.82h1.69v1.69h-1.69zM564.93,705.82h1.69v1.69h-1.69zM570.00,705.82h1.69v1.69h-1.69zM576.76,705.82h1.69v1.69h-1.69zM537.89,707.51h1.69v1.69h-1.69zM539.58,707.51h1.69v1.69h-1.69zM553.10,707.51h1.69v1.69h-1.69zM554.79,707.51h1.69v1.69h-1.69zM556.48,707.51h1.69v1.69h-1.69zM558.17,707.51h1.69v1.69h-1.69zM561.55,707.51h1.69v1.69h-1.69zM563.24,707.51h1.69v1.69h-1.69zM564.93,707.51h1.69v1.69h-1.69zM568.31,707.51h1.69v1.69h-1.69zM541.27,709.20h1.69v1.69h-1.69zM544.65,709.20h1.69v1.69h-1.69zM546.34,709.20h1.69v1.69h-1.69zM549.72,709.20h1.69v1.69h-1.69zM556.48,709.20h1.69v1.69h-1.69zM563.24,709.20h1.69v1.69h-1.69zM566.62,709.20h1.69v1.69h-1.69zM568.31,709.20h1.69v1.69h-1.69zM556.48,710.89h1.69v1.69h-1.69zM563.24,710.89h1.69v1.69h-1.69zM564.93,710.89h1.69v1.69h-1.69zM568.31,710.89h1.69v1.69h-1.69zM570.00,710.89h1.69v1.69h-1.69zM571.69,710.89h1.69v1.69h-1.69zM536.20,712.58h1.69v1.69h-1.69zM541.27,712.58h1.69v1.69h-1.69zM546.34,712.58h1.69v1.69h-1.69zM549.72,712.58h1.69v1.69h-1.69zM556.48,712.58h1.69v1.69h-1.69zM561.55,712.58h1.69v1.69h-1.69zM563.24,712.58h1.69v1.69h-1.69zM564.93,712.58h1.69v1.69h-1.69zM568.31,712.58h1.69v1.69h-1.69zM573.38,712.58h1.69v1.69h-1.69zM575.07,712.58h1.69v1.69h-1.69zM537.89,714.27h1.69v1.69h-1.69zM544.65,714.27h1.69v1.69h-1.69zM548.03,714.27h1.69v1.69h-1.69zM551.41,714.27h1.69v1.69h-1.69zM553.10,714.27h1.69v1.69h-1.69zM559.86,714.27h1.69v1.69h-1.69zM561.55,714.27h1.69v1.69h-1.69zM568.31,714.27h1.69v1.69h-1.69zM570.00,714.27h1.69v1.69h-1.69zM575.07,714.27h1.69v1.69h-1.69zM539.58,715.96h1.69v1.69h-1.69zM542.96,715.96h1.69v1.69h-1.69zM546.34,715.96h1.69v1.69h-1.69zM548.03,715.96h1.69v1.69h-1.69zM553.10,715.96h1.69v1.69h-1.69zM554.79,715.96h1.69v1.69h-1.69zM558.17,715.96h1.69v1.69h-1.69zM559.86,715.96h1.69v1.69h-1.69zM561.55,715.96h1.69v1.69h-1.69zM563.24,715.96h1.69v1.69h-1.69zM564.93,715.96h1.69v1.69h-1.69zM566.62,715.96h1.69v1.69h-1.69zM568.31,715.96h1.69v1.69h-1.69zM571.69,715.96h1.69v1.69h-1.69zM575.07,715.96h1.69v1.69h-1.69zM576.76,715.96h1.69v1.69h-1.69zM536.20,717.65h1.69v1.69h-1.69zM537.89,717.65h1.69v1.69h-1.69zM539.58,717.65h1.69v1.69h-1.69zM544.65,717.65h1.69v1.69h-1.69zM549.72,717.65h1.69v1.69h-1.69zM558.17,717.65h1.69v1.69h-1.69zM559.86,717.65h1.69v1.69h-1.69zM566.62,717.65h1.69v1.69h-1.69zM571.69,717.65h1.69v1.69h-1.69zM573.38,717.65h1.69v1.69h-1.69zM575.07,717.65h1.69v1.69h-1.69zM576.76,717.65h1.69v1.69h-1.69zM536.20,719.34h1.69v1.69h-1.69zM539.58,719.34h1.69v1.69h-1.69zM541.27,719.34h1.69v1.69h-1.69zM542.96,719.34h1.69v1.69h-1.69zM546.34,719.34h1.69v1.69h-1.69zM549.72,719.34h1.69v1.69h-1.69zM551.41,719.34h1.69v1.69h-1.69zM553.10,719.34h1.69v1.69h-1.69zM556.48,719.34h1.69v1.69h-1.69zM559.86,719.34h1.69v1.69h-1.69zM563.24,719.34h1.69v1.69h-1.69zM566.62,719.34h1.69v1.69h-1.69zM570.00,719.34h1.69v1.69h-1.69zM571.69,719.34h1.69v1.69h-1.69zM573.38,719.34h1.69v1.69h-1.69zM575.07,719.34h1.69v1.69h-1.69zM549.72,721.03h1.69v1.69h-1.69zM551.41,721.03h1.69v1.69h-1.69zM553.10,721.03h1.69v1.69h-1.69zM559.86,721.03h1.69v1.69h-1.69zM566.62,721.03h1.69v1.69h-1.69zM570.00,721.03h1.69v1.69h-1.69zM575.07,721.03h1.69v1.69h-1.69zM536.20,722.72h1.69v1.69h-1.69zM537.89,722.72h1.69v1.69h-1.69zM539.58,722.72h1.69v1.69h-1.69zM541.27,722.72h1.69v1.69h-1.69zM542.96,722.72h1.69v1.69h-1.69zM544.65,722.72h1.69v1.69h-1.69zM546.34,722.72h1.69v1.69h-1.69zM559.86,722.72h1.69v1.69h-1.69zM561.55,722.72h1.69v1.69h-1.69zM563.24,722.72h1.69v1.69h-1.69zM564.93,722.72h1.69v1.69h-1.69zM566.62,722.72h1.69v1.69h-1.69zM536.20,724.41h1.69v1.69h-1.69zM546.34,724.41h1.69v1.69h-1.69zM549.72,724.41h1.69v1.69h-1.69zM551.41,724.41h1.69v1.69h-1.69zM553.10,724.41h1.69v1.69h-1.69zM556.48,724.41h1.69v1.69h-1.69zM563.24,724.41h1.69v1.69h-1.69zM573.38,724.41h1.69v1.69h-1.69zM575.07,724.41h1.69v1.69h-1.69zM576.76,724.41h1.69v1.69h-1.69zM536.20,726.10h1.69v1.69h-1.69zM539.58,726.10h1.69v1.69h-1.69zM541.27,726.10h1.69v1.69h-1.69zM542.96,726.10h1.69v1.69h-1.69zM546.34,726.10h1.69v1.69h-1.69zM551.41,726.10h1.69v1.69h-1.69zM558.17,726.10h1.69v1.69h-1.69zM561.55,726.10h1.69v1.69h-1.69zM566.62,726.10h1.69v1.69h-1.69zM575.07,726.10h1.69v1.69h-1.69zM576.76,726.10h1.69v1.69h-1.69zM536.20,727.79h1.69v1.69h-1.69zM539.58,727.79h1.69v1.69h-1.69zM541.27,727.79h1.69v1.69h-1.69zM542.96,727.79h1.69v1.69h-1.69zM546.34,727.79h1.69v1.69h-1.69zM554.79,727.79h1.69v1.69h-1.69zM559.86,727.79h1.69v1.69h-1.69zM561.55,727.79h1.69v1.69h-1.69zM566.62,727.79h1.69v1.69h-1.69zM568.31,727.79h1.69v1.69h-1.69zM570.00,727.79h1.69v1.69h-1.69zM571.69,727.79h1.69v1.69h-1.69zM575.07,727.79h1.69v1.69h-1.69zM536.20,729.48h1.69v1.69h-1.69zM539.58,729.48h1.69v1.69h-1.69zM541.27,729.48h1.69v1.69h-1.69zM542.96,729.48h1.69v1.69h-1.69zM546.34,729.48h1.69v1.69h-1.69zM553.10,729.48h1.69v1.69h-1.69zM556.48,729.48h1.69v1.69h-1.69zM558.17,729.48h1.69v1.69h-1.69zM559.86,729.48h1.69v1.69h-1.69zM563.24,729.48h1.69v1.69h-1.69zM566.62,729.48h1.69v1.69h-1.69zM568.31,729.48h1.69v1.69h-1.69zM571.69,729.48h1.69v1.69h-1.69zM573.38,729.48h1.69v1.69h-1.69zM536.20,731.17h1.69v1.69h-1.69zM546.34,731.17h1.69v1.69h-1.69zM554.79,731.17h1.69v1.69h-1.69zM556.48,731.17h1.69v1.69h-1.69zM559.86,731.17h1.69v1.69h-1.69zM563.24,731.17h1.69v1.69h-1.69zM564.93,731.17h1.69v1.69h-1.69zM570.00,731.17h1.69v1.69h-1.69zM573.38,731.17h1.69v1.69h-1.69zM576.76,731.17h1.69v1.69h-1.69zM536.20,732.86h1.69v1.69h-1.69zM537.89,732.86h1.69v1.69h-1.69zM539.58,732.86h1.69v1.69h-1.69zM541.27,732.86h1.69v1.69h-1.69zM542.96,732.86h1.69v1.69h-1.69zM544.65,732.86h1.69v1.69h-1.69zM546.34,732.86h1.69v1.69h-1.69zM551.41,732.86h1.69v1.69h-1.69zM553.10,732.86h1.69v1.69h-1.69zM554.79,732.86h1.69v1.69h-1.69zM556.48,732.86h1.69v1.69h-1.69zM558.17,732.86h1.69v1.69h-1.69zM559.86,732.86h1.69v1.69h-1.69zM561.55,732.86h1.69v1.69h-1.69zM568.31,732.86h1.69v1.69h-1.69zM570.00,732.86h1.69v1.69h-1.69zM573.38,732.86h1.69v1.69h-1.69zM575.07,732.86h1.69v1.69h-1.69zM576.76,732.86h1.69v1.69h-1.69z" fill="#d2c7c0"/>
<rect x="821.8" y="406.5" width="173.4" height="433" fill="#333"/><rect x="823" y="408" width="171.5" height="427" fill="#535353"/><rect x="823" y="408" width="171.5" height="15.3" fill="#434343"/><rect x="823" y="408.5" width="25" height="15" fill="#535353"/><rect x="848" y="408.5" width="42" height="14.8" fill="#474747"/><rect x="890" y="408.5" width="35" height="14.8" fill="#474747"/><rect x="889.8" y="408.5" width="0.6" height="14.8" fill="#3d3d3d"/><rect x="924.8" y="408.5" width="0.6" height="14.8" fill="#3d3d3d"/><text x="827.5" y="417.3" font-size="5.3" font-weight="bold" fill="#e6e6e6">Layers</text><text x="853" y="417.3" font-size="5.3" fill="#b4b4b4">Asset Export</text><text x="894" y="417.3" font-size="5.3" fill="#b4b4b4">Artboards</text><path d="M973.5,413.8 L975.2,415.5 L973.5,417.2 M976.3,413.8 L978,415.5 L976.3,417.2" fill="none" stroke="#c8c8c8" stroke-width="0.7"/><rect x="981.8" y="413" width="0.6" height="5" fill="#999"/><path d="M986,413.7 h6 M986,415.5 h6 M986,417.3 h6" stroke="#aaa" stroke-width="0.7"/><rect x="829" y="428.8" width="147" height="11.8" rx="0.8" fill="#454545"/><circle cx="834.5" cy="434" r="1.8" fill="none" stroke="#c8c8c8" stroke-width="0.8"/><path d="M835.8,435.3 L837.5,437" stroke="#c8c8c8" stroke-width="0.9"/><text x="843.5" y="437.2" font-size="5.9" fill="#5c5c5c">Search All</text><path d="M981.5,431 L988.5,431 L985.8,434.5 L985.8,438.5 L984.3,437.5 L984.3,434.5 Z" fill="#c8c8c8"/><rect x="824.7" y="444" width="167.7" height="380" fill="none" stroke="#5a5a5a" stroke-width="0.5"/><rect x="825" y="445.80" width="167.5" height="10.68" fill="#4b6682"/><path d="M989,445.80 L992.4,445.80 L992.4,449.20 Z" fill="#e0e0e0"/><rect x="825" y="456.48" width="167.5" height="0.6" fill="#4a4a4a"/><rect x="836.3" y="445.80" width="0.5" height="10.68" fill="#4a4a4a"/><rect x="972.3" y="445.80" width="0.5" height="10.68" fill="#4a4a4a"/><path d="M827.8,451.44 C829.5,448.84 832.5,448.84 834.2,451.44 C832.5,454.04 829.5,454.04 827.8,451.44 Z" fill="#b8b8b8"/><ellipse cx="831" cy="451.44" rx="1.5" ry="1.1" fill="#6a6a6a"/><rect x="848.4" y="446.30" width="1.7" height="10.08" fill="#3ee03e"/><path d="M855.3,450.64 L857,452.24 L858.7,450.64" fill="none" stroke="#c8c8c8" stroke-width="0.8"/><rect x="863.90" y="446.34" width="10.30" height="10.20" fill="#222"/><rect x="864.30" y="446.74" width="9.5" height="9.4" fill="#ffffff"/><rect x="867.30" y="448.24" width="3" height="1.2" fill="#666"/><rect x="865.80" y="450.24" width="6" height="0.8" fill="#999"/><rect x="866.30" y="452.24" width="2" height="1.5" fill="#777"/><rect x="869.30" y="452.24" width="2.5" height="1.5" fill="#777"/><rect x="865.30" y="454.74" width="7.5" height="0.6" fill="#aaa"/><text x="877" y="453.14" font-size="5.3" fill="#d2d2d2">fol</text><circle cx="978.3" cy="451.44" r="1.8" fill="none" stroke="#c0c0c0" stroke-width="0.7"/><rect x="825" y="467.76" width="167.5" height="0.6" fill="#4a4a4a"/><rect x="836.3" y="457.08" width="0.5" height="10.68" fill="#4a4a4a"/><rect x="972.3" y="457.08" width="0.5" height="10.68" fill="#4a4a4a"/><path d="M827.8,462.72 C829.5,460.12 832.5,460.12 834.2,462.72 C832.5,465.32 829.5,465.32 827.8,462.72 Z" fill="#b8b8b8"/><ellipse cx="831" cy="462.72" rx="1.5" ry="1.1" fill="#6a6a6a"/><rect x="848.4" y="457.58" width="1.7" height="10.08" fill="#3ee03e"/><path d="M867.4,461.02 L869,462.72 L867.4,464.42" fill="none" stroke="#c8c8c8" stroke-width="0.8"/><rect x="876.60" y="457.62" width="10.30" height="10.20" fill="#222"/><rect x="877.00" y="458.02" width="9.5" height="9.4" fill="#ffffff"/><rect x="880.50" y="459.02" width="3" height="3" fill="#333"/><rect x="879.00" y="462.52" width="5" height="1" fill="#666"/><rect x="878.00" y="465.52" width="7.5" height="1.2" fill="#111111"/><text x="889.5" y="464.42" font-size="5.3" fill="#d2d2d2">&lt;Group&gt;</text><circle cx="978.3" cy="462.72" r="1.8" fill="#9a9a9a" stroke="#c0c0c0" stroke-width="0.6"/><rect x="825" y="479.04" width="167.5" height="0.6" fill="#4a4a4a"/><rect x="836.3" y="468.36" width="0.5" height="10.68" fill="#4a4a4a"/><rect x="972.3" y="468.36" width="0.5" height="10.68" fill="#4a4a4a"/><path d="M827.8,474.00 C829.5,471.40 832.5,471.40 834.2,474.00 C832.5,476.60 829.5,476.60 827.8,474.00 Z" fill="#b8b8b8"/><ellipse cx="831" cy="474.00" rx="1.5" ry="1.1" fill="#6a6a6a"/><rect x="848.4" y="468.86" width="1.7" height="10.08" fill="#3ee03e"/><path d="M867.4,472.30 L869,474.00 L867.4,475.70" fill="none" stroke="#c8c8c8" stroke-width="0.8"/><rect x="876.60" y="468.90" width="10.30" height="10.20" fill="#222"/><rect x="877.00" y="469.30" width="9.5" height="9.4" fill="#ffffff"/><rect x="877.00" y="469.30" width="9.5" height="9.4" fill="#111111"/><path d="M877.00,470.30 L881.75,474.80 L886.50,470.30" fill="none" stroke="#ffffff" stroke-width="1"/><text x="889.5" y="475.70" font-size="5.3" fill="#d2d2d2">&lt;Group&gt;</text><circle cx="978.3" cy="474.00" r="1.8" fill="none" stroke="#c0c0c0" stroke-width="0.7"/><rect x="825" y="490.32" width="167.5" height="0.6" fill="#4a4a4a"/><rect x="836.3" y="479.64" width="0.5" height="10.68" fill="#4a4a4a"/><rect x="972.3" y="479.64" width="0.5" height="10.68" fill="#4a4a4a"/><path d="M827.8,485.28 C829.5,482.68 832.5,482.68 834.2,485.28 C832.5,487.88 829.5,487.88 827.8,485.28 Z" fill="#b8b8b8"/><ellipse cx="831" cy="485.28" rx="1.5" ry="1.1" fill="#6a6a6a"/><rect x="848.4" y="480.14" width="1.7" height="10.08" fill="#3ee03e"/><path d="M867.4,483.58 L869,485.28 L867.4,486.98" fill="none" stroke="#c8c8c8" stroke-width="0.8"/><rect x="876.60" y="480.18" width="10.30" height="10.20" fill="#222"/><rect x="877.00" y="480.58" width="9.5" height="9.4" fill="#ffffff"/><path d="M881.75,489.58 C878.00,485.58 878.50,481.38 881.75,481.38 C885.00,481.38 885.50,485.58 881.75,489.58 Z" fill="none" stroke="#111111" stroke-width="1"/><circle cx="881.75" cy="484.28" r="1" fill="#111111"/><text x="889.5" y="486.98" font-size="5.3" fill="#d2d2d2">&lt;Group&gt;</text><circle cx="978.3" cy="485.28" r="1.8" fill="none" stroke="#c0c0c0" stroke-width="0.7"/><rect x="825" y="501.60" width="167.5" height="0.6" fill="#4a4a4a"/><rect x="836.3" y="490.92" width="0.5" height="10.68" fill="#4a4a4a"/><rect x="972.3" y="490.92" width="0.5" height="10.68" fill="#4a4a4a"/><path d="M827.8,496.56 C829.5,493.96 832.5,493.96 834.2,496.56 C832.5,499.16 829.5,499.16 827.8,496.56 Z" fill="#b8b8b8"/><ellipse cx="831" cy="496.56" rx="1.5" ry="1.1" fill="#6a6a6a"/><rect x="848.4" y="491.42" width="1.7" height="10.08" fill="#3ee03e"/><path d="M867.4,494.86 L869,496.56 L867.4,498.26" fill="none" stroke="#c8c8c8" stroke-width="0.8"/><rect x="876.60" y="491.46" width="10.30" height="10.20" fill="#222"/><rect x="877.00" y="491.86" width="9.5" height="9.4" fill="#ffffff"/><rect x="878.00" y="492.86" width="7.5" height="7.4" rx="2" fill="none" stroke="#111111" stroke-width="1"/><circle cx="881.75" cy="496.56" r="2" fill="none" stroke="#111111" stroke-width="1"/><text x="889.5" y="498.26" font-size="5.3" fill="#d2d2d2">&lt;Group&gt;</text><circle cx="978.3" cy="496.56" r="1.8" fill="#9a9a9a" stroke="#c0c0c0" stroke-width="0.6"/><rect x="825" y="512.88" width="167.5" height="0.6" fill="#4a4a4a"/><rect x="836.3" y="502.20" width="0.5" height="10.68" fill="#4a4a4a"/><rect x="972.3" y="502.20" width="0.5" height="10.68" fill="#4a4a4a"/><path d="M827.8,507.84 C829.5,505.24 832.5,505.24 834.2,507.84 C832.5,510.44 829.5,510.44 827.8,507.84 Z" fill="#b8b8b8"/><ellipse cx="831" cy="507.84" rx="1.5" ry="1.1" fill="#6a6a6a"/><rect x="848.4" y="502.70" width="1.7" height="10.08" fill="#3ee03e"/><path d="M867.4,506.14 L869,507.84 L867.4,509.54" fill="none" stroke="#c8c8c8" stroke-width="0.8"/><rect x="876.60" y="502.74" width="10.30" height="10.20" fill="#222"/><rect x="877.00" y="503.14" width="9.5" height="9.4" fill="#ffffff"/><circle cx="881.75" cy="507.84" r="3.8" fill="none" stroke="#111111" stroke-width="1.1"/><path d="M880.00,507.14 C881.00,510.14 883.00,509.14 883.50,509.14" stroke="#111111" stroke-width="1.2" fill="none"/><text x="889.5" y="509.54" font-size="5.3" fill="#d2d2d2">&lt;Group&gt;</text><circle cx="978.3" cy="507.84" r="1.8" fill="none" stroke="#c0c0c0" stroke-width="0.7"/><rect x="825" y="524.16" width="167.5" height="0.6" fill="#4a4a4a"/><rect x="836.3" y="513.48" width="0.5" height="10.68" fill="#4a4a4a"/><rect x="972.3" y="513.48" width="0.5" height="10.68" fill="#4a4a4a"/><path d="M827.8,519.12 C829.5,516.52 832.5,516.52 834.2,519.12 C832.5,521.72 829.5,521.72 827.8,519.12 Z" fill="#b8b8b8"/><ellipse cx="831" cy="519.12" rx="1.5" ry="1.1" fill="#6a6a6a"/><rect x="848.4" y="513.98" width="1.7" height="10.08" fill="#3ee03e"/><rect x="876.60" y="514.02" width="10.30" height="10.20" fill="#222"/><rect x="877.00" y="514.42" width="9.5" height="9.4" fill="#ffffff"/><rect x="877.00" y="516.92" width="9.5" height="0.5" fill="#999"/><rect x="877.00" y="519.42" width="9.5" height="0.5" fill="#999"/><rect x="877.00" y="521.92" width="9.5" height="0.5" fill="#999"/><text x="889.5" y="520.82" font-size="5.3" fill="#d2d2d2">&lt;Rectangle&gt;</text><circle cx="978.3" cy="519.12" r="1.8" fill="none" stroke="#c0c0c0" stroke-width="0.7"/><rect x="825" y="535.44" width="167.5" height="0.6" fill="#4a4a4a"/><rect x="836.3" y="524.76" width="0.5" height="10.68" fill="#4a4a4a"/><rect x="972.3" y="524.76" width="0.5" height="10.68" fill="#4a4a4a"/><path d="M827.8,530.40 C829.5,527.80 832.5,527.80 834.2,530.40 C832.5,533.00 829.5,533.00 827.8,530.40 Z" fill="#b8b8b8"/><ellipse cx="831" cy="530.40" rx="1.5" ry="1.1" fill="#6a6a6a"/><rect x="848.4" y="525.26" width="1.7" height="10.08" fill="#3ee03e"/><rect x="876.60" y="525.30" width="10.30" height="10.20" fill="#222"/><rect x="877.00" y="525.70" width="9.5" height="9.4" fill="#ffffff"/><text x="889.5" y="532.10" font-size="5.3" fill="#d2d2d2">&lt;Rectangle&gt;</text><circle cx="978.3" cy="530.40" r="1.8" fill="none" stroke="#c0c0c0" stroke-width="0.7"/><rect x="825" y="546.72" width="167.5" height="0.6" fill="#4a4a4a"/><rect x="836.3" y="536.04" width="0.5" height="10.68" fill="#4a4a4a"/><rect x="972.3" y="536.04" width="0.5" height="10.68" fill="#4a4a4a"/><path d="M827.8,541.68 C829.5,539.08 832.5,539.08 834.2,541.68 C832.5,544.28 829.5,544.28 827.8,541.68 Z" fill="#b8b8b8"/><ellipse cx="831" cy="541.68" rx="1.5" ry="1.1" fill="#6a6a6a"/><rect x="848.4" y="536.54" width="1.7" height="10.08" fill="#3ee03e"/><path d="M867.4,539.98 L869,541.68 L867.4,543.38" fill="none" stroke="#c8c8c8" stroke-width="0.8"/><rect x="876.60" y="536.58" width="10.30" height="10.20" fill="#222"/><rect x="877.00" y="536.98" width="9.5" height="9.4" fill="#ffffff"/><rect x="877.00" y="536.98" width="1" height="9.4" fill="#111111"/><rect x="881.50" y="536.98" width="1" height="9.4" fill="#111111"/><rect x="885.50" y="536.98" width="1" height="9.4" fill="#111111"/><text x="889.5" y="543.38" font-size="5.3" fill="#d2d2d2">&lt;Group&gt;</text><circle cx="978.3" cy="541.68" r="1.8" fill="none" stroke="#c0c0c0" stroke-width="0.7"/><rect x="825" y="558.00" width="167.5" height="0.6" fill="#4a4a4a"/><rect x="836.3" y="547.32" width="0.5" height="10.68" fill="#4a4a4a"/><rect x="972.3" y="547.32" width="0.5" height="10.68" fill="#4a4a4a"/><path d="M827.8,552.96 C829.5,550.36 832.5,550.36 834.2,552.96 C832.5,555.56 829.5,555.56 827.8,552.96 Z" fill="#b8b8b8"/><ellipse cx="831" cy="552.96" rx="1.5" ry="1.1" fill="#6a6a6a"/><rect x="848.4" y="547.82" width="1.7" height="10.08" fill="#3ee03e"/><path d="M867.4,551.26 L869,552.96 L867.4,554.66" fill="none" stroke="#c8c8c8" stroke-width="0.8"/><rect x="876.60" y="547.86" width="10.30" height="10.20" fill="#222"/><rect x="877.00" y="548.26" width="9.5" height="9.4" fill="#ffffff"/><rect x="877.00" y="549.26" width="9.5" height="1.2" fill="#111111"/><rect x="878.00" y="552.26" width="8.5" height="1" fill="#111111"/><rect x="877.00" y="554.76" width="9.5" height="1.2" fill="#111111"/><text x="889.5" y="554.66" font-size="5.3" fill="#d2d2d2">&lt;Group&gt;</text><circle cx="978.3" cy="552.96" r="1.8" fill="none" stroke="#c0c0c0" stroke-width="0.7"/><rect x="825" y="569.28" width="167.5" height="0.6" fill="#4a4a4a"/><rect x="836.3" y="558.60" width="0.5" height="10.68" fill="#4a4a4a"/><rect x="972.3" y="558.60" width="0.5" height="10.68" fill="#4a4a4a"/><path d="M827.8,564.24 C829.5,561.64 832.5,561.64 834.2,564.24 C832.5,566.84 829.5,566.84 827.8,564.24 Z" fill="#b8b8b8"/><ellipse cx="831" cy="564.24" rx="1.5" ry="1.1" fill="#6a6a6a"/><rect x="848.4" y="559.10" width="1.7" height="10.08" fill="#3ee03e"/><path d="M867.4,562.54 L869,564.24 L867.4,565.94" fill="none" stroke="#c8c8c8" stroke-width="0.8"/><rect x="876.60" y="559.14" width="10.30" height="10.20" fill="#222"/><rect x="877.00" y="559.54" width="9.5" height="9.4" fill="#ffffff"/><rect x="878.00" y="563.54" width="7" height="2.5" fill="#111111"/><rect x="882.00" y="561.54" width="3" height="2" fill="#111111"/><text x="889.5" y="565.94" font-size="5.3" fill="#d2d2d2">&lt;Group&gt;</text><circle cx="978.3" cy="564.24" r="1.8" fill="#9a9a9a" stroke="#c0c0c0" stroke-width="0.6"/><rect x="825" y="580.56" width="167.5" height="0.6" fill="#4a4a4a"/><rect x="836.3" y="569.88" width="0.5" height="10.68" fill="#4a4a4a"/><rect x="972.3" y="569.88" width="0.5" height="10.68" fill="#4a4a4a"/><path d="M827.8,575.52 C829.5,572.92 832.5,572.92 834.2,575.52 C832.5,578.12 829.5,578.12 827.8,575.52 Z" fill="#b8b8b8"/><ellipse cx="831" cy="575.52" rx="1.5" ry="1.1" fill="#6a6a6a"/><rect x="848.4" y="570.38" width="1.7" height="10.08" fill="#3ee03e"/><path d="M867.4,573.82 L869,575.52 L867.4,577.22" fill="none" stroke="#c8c8c8" stroke-width="0.8"/><rect x="876.60" y="570.42" width="10.30" height="10.20" fill="#222"/><rect x="877.00" y="570.82" width="9.5" height="9.4" fill="#ffffff"/><rect x="877.00" y="574.32" width="9.5" height="2.5" fill="#111111"/><text x="889.5" y="577.22" font-size="5.3" fill="#d2d2d2">&lt;Group&gt;</text><circle cx="978.3" cy="575.52" r="1.8" fill="none" stroke="#c0c0c0" stroke-width="0.7"/><rect x="825" y="591.84" width="167.5" height="0.6" fill="#4a4a4a"/><rect x="836.3" y="581.16" width="0.5" height="10.68" fill="#4a4a4a"/><rect x="972.3" y="581.16" width="0.5" height="10.68" fill="#4a4a4a"/><path d="M827.8,586.80 C829.5,584.20 832.5,584.20 834.2,586.80 C832.5,589.40 829.5,589.40 827.8,586.80 Z" fill="#b8b8b8"/><ellipse cx="831" cy="586.80" rx="1.5" ry="1.1" fill="#6a6a6a"/><rect x="848.4" y="581.66" width="1.7" height="10.08" fill="#3ee03e"/><path d="M867.4,585.10 L869,586.80 L867.4,588.50" fill="none" stroke="#c8c8c8" stroke-width="0.8"/><rect x="876.60" y="581.70" width="10.30" height="10.20" fill="#222"/><rect x="877.00" y="582.10" width="9.5" height="9.4" fill="#ffffff"/><rect x="878.00" y="585.10" width="7" height="1" fill="#111111"/><rect x="878.00" y="587.10" width="7" height="1.2" fill="#111111"/><text x="889.5" y="588.50" font-size="5.3" fill="#d2d2d2">&lt;Group&gt;</text><circle cx="978.3" cy="586.80" r="1.8" fill="none" stroke="#c0c0c0" stroke-width="0.7"/><rect x="825" y="603.12" width="167.5" height="0.6" fill="#4a4a4a"/><rect x="836.3" y="592.44" width="0.5" height="10.68" fill="#4a4a4a"/><rect x="972.3" y="592.44" width="0.5" height="10.68" fill="#4a4a4a"/><path d="M827.8,598.08 C829.5,595.48 832.5,595.48 834.2,598.08 C832.5,600.68 829.5,600.68 827.8,598.08 Z" fill="#b8b8b8"/><ellipse cx="831" cy="598.08" rx="1.5" ry="1.1" fill="#6a6a6a"/><rect x="848.4" y="592.94" width="1.7" height="10.08" fill="#3ee03e"/><rect x="876.60" y="592.98" width="10.30" height="10.20" fill="#222"/><rect x="877.00" y="593.38" width="9.5" height="9.4" fill="#ffffff"/><rect x="877.00" y="595.88" width="9.5" height="0.5" fill="#999"/><rect x="877.00" y="598.38" width="9.5" height="0.5" fill="#999"/><rect x="877.00" y="600.88" width="9.5" height="0.5" fill="#999"/><text x="889.5" y="599.78" font-size="5.3" fill="#d2d2d2">&lt;Rectangle&gt;</text><circle cx="978.3" cy="598.08" r="1.8" fill="none" stroke="#c0c0c0" stroke-width="0.7"/><rect x="825" y="614.40" width="167.5" height="0.6" fill="#4a4a4a"/><rect x="836.3" y="603.72" width="0.5" height="10.68" fill="#4a4a4a"/><rect x="972.3" y="603.72" width="0.5" height="10.68" fill="#4a4a4a"/><path d="M827.8,609.36 C829.5,606.76 832.5,606.76 834.2,609.36 C832.5,611.96 829.5,611.96 827.8,609.36 Z" fill="#b8b8b8"/><ellipse cx="831" cy="609.36" rx="1.5" ry="1.1" fill="#6a6a6a"/><rect x="848.4" y="604.22" width="1.7" height="10.08" fill="#4a6ef0"/><path d="M855.3,608.56 L857,610.16 L858.7,608.56" fill="none" stroke="#c8c8c8" stroke-width="0.8"/><rect x="863.90" y="604.26" width="10.30" height="10.20" fill="#222"/><rect x="864.30" y="604.66" width="9.5" height="9.4" fill="#ffffff"/><rect x="864.30" y="604.66" width="9.5" height="4.5" fill="#c8bab1"/><rect x="864.30" y="610.16" width="9.5" height="3.9000000000000004" fill="#c8bab1"/><rect x="864.30" y="609.16" width="9.5" height="1" fill="#f0ebe6"/><rect x="865.30" y="611.66" width="7" height="0.7" fill="#ffffff"/><text x="877" y="611.06" font-size="5.3" fill="#d2d2d2">cmyk</text><circle cx="978.3" cy="609.36" r="1.8" fill="#9a9a9a" stroke="#c0c0c0" stroke-width="0.6"/><rect x="825" y="625.68" width="167.5" height="0.6" fill="#4a4a4a"/><rect x="836.3" y="615.00" width="0.5" height="10.68" fill="#4a4a4a"/><rect x="972.3" y="615.00" width="0.5" height="10.68" fill="#4a4a4a"/><path d="M827.8,620.64 C829.5,618.04 832.5,618.04 834.2,620.64 C832.5,623.24 829.5,623.24 827.8,620.64 Z" fill="#b8b8b8"/><ellipse cx="831" cy="620.64" rx="1.5" ry="1.1" fill="#6a6a6a"/><rect x="848.4" y="615.50" width="1.7" height="10.08" fill="#4a6ef0"/><rect x="876.60" y="615.54" width="10.30" height="10.20" fill="#222"/><rect x="877.00" y="615.94" width="9.5" height="9.4" fill="#ffffff"/><rect x="877.00" y="615.94" width="9.5" height="9.4" fill="#e9e2dc"/><rect x="878.00" y="617.44" width="6" height="0.8" fill="#b7a396"/><rect x="878.00" y="619.44" width="5" height="0.8" fill="#b7a396"/><rect x="878.00" y="621.44" width="6" height="0.8" fill="#b7a396"/><rect x="878.00" y="623.44" width="4" height="0.8" fill="#b7a396"/><text x="889.5" y="622.34" font-size="5.3" fill="#d2d2d2">Lashes Extensions | Lash ...</text><circle cx="978.3" cy="620.64" r="1.8" fill="none" stroke="#c0c0c0" stroke-width="0.7"/><rect x="825" y="636.96" width="167.5" height="0.6" fill="#4a4a4a"/><rect x="836.3" y="626.28" width="0.5" height="10.68" fill="#4a4a4a"/><rect x="972.3" y="626.28" width="0.5" height="10.68" fill="#4a4a4a"/><path d="M827.8,631.92 C829.5,629.32 832.5,629.32 834.2,631.92 C832.5,634.52 829.5,634.52 827.8,631.92 Z" fill="#b8b8b8"/><ellipse cx="831" cy="631.92" rx="1.5" ry="1.1" fill="#6a6a6a"/><rect x="848.4" y="626.78" width="1.7" height="10.08" fill="#4a6ef0"/><rect x="876.60" y="626.82" width="10.30" height="10.20" fill="#222"/><rect x="877.00" y="627.22" width="9.5" height="9.4" fill="#ffffff"/><rect x="877.00" y="627.22" width="9.5" height="9.4" fill="#e5ddd6"/><rect x="878.50" y="628.72" width="6" height="6" fill="#c9b9ae"/><text x="889.5" y="633.62" font-size="5.3" fill="#d2d2d2">&lt;Image&gt;</text><circle cx="978.3" cy="631.92" r="1.8" fill="none" stroke="#c0c0c0" stroke-width="0.7"/><rect x="825" y="648.24" width="167.5" height="0.6" fill="#4a4a4a"/><rect x="836.3" y="637.56" width="0.5" height="10.68" fill="#4a4a4a"/><rect x="972.3" y="637.56" width="0.5" height="10.68" fill="#4a4a4a"/><path d="M827.8,643.20 C829.5,640.60 832.5,640.60 834.2,643.20 C832.5,645.80 829.5,645.80 827.8,643.20 Z" fill="#b8b8b8"/><ellipse cx="831" cy="643.20" rx="1.5" ry="1.1" fill="#6a6a6a"/><rect x="848.4" y="638.06" width="1.7" height="10.08" fill="#4a6ef0"/><rect x="876.60" y="638.10" width="10.30" height="10.20" fill="#222"/><rect x="877.00" y="638.50" width="9.5" height="9.4" fill="#ffffff"/><rect x="878.00" y="640.50" width="5" height="0.8" fill="#b7a396"/><rect x="878.00" y="642.50" width="6" height="0.8" fill="#b7a396"/><rect x="878.00" y="644.50" width="5" height="0.8" fill="#b7a396"/><text x="889.5" y="644.90" font-size="5.3" fill="#d2d2d2">(917)-214-1344 @advabit...</text><circle cx="978.3" cy="643.20" r="1.8" fill="none" stroke="#c0c0c0" stroke-width="0.7"/><rect x="825" y="659.52" width="167.5" height="0.6" fill="#4a4a4a"/><rect x="836.3" y="648.84" width="0.5" height="10.68" fill="#4a4a4a"/><rect x="972.3" y="648.84" width="0.5" height="10.68" fill="#4a4a4a"/><path d="M827.8,654.48 C829.5,651.88 832.5,651.88 834.2,654.48 C832.5,657.08 829.5,657.08 827.8,654.48 Z" fill="#b8b8b8"/><ellipse cx="831" cy="654.48" rx="1.5" ry="1.1" fill="#6a6a6a"/><rect x="848.4" y="649.34" width="1.7" height="10.08" fill="#4a6ef0"/><rect x="876.60" y="649.38" width="10.30" height="10.20" fill="#222"/><rect x="877.00" y="649.78" width="9.5" height="9.4" fill="#ffffff"/><text x="889.5" y="656.18" font-size="5.3" fill="#d2d2d2">&lt;Type&gt;</text><circle cx="978.3" cy="654.48" r="1.8" fill="none" stroke="#c0c0c0" stroke-width="0.7"/><rect x="825" y="670.80" width="167.5" height="0.6" fill="#4a4a4a"/><rect x="836.3" y="660.12" width="0.5" height="10.68" fill="#4a4a4a"/><rect x="972.3" y="660.12" width="0.5" height="10.68" fill="#4a4a4a"/><path d="M827.8,665.76 C829.5,663.16 832.5,663.16 834.2,665.76 C832.5,668.36 829.5,668.36 827.8,665.76 Z" fill="#b8b8b8"/><ellipse cx="831" cy="665.76" rx="1.5" ry="1.1" fill="#6a6a6a"/><rect x="848.4" y="660.62" width="1.7" height="10.08" fill="#4a6ef0"/><rect x="876.60" y="660.66" width="10.30" height="10.20" fill="#222"/><rect x="877.00" y="661.06" width="9.5" height="9.4" fill="#ffffff"/><text x="889.5" y="667.46" font-size="5.3" fill="#d2d2d2">&lt;Rectangle&gt;</text><circle cx="978.3" cy="665.76" r="1.8" fill="none" stroke="#c0c0c0" stroke-width="0.7"/><rect x="825" y="682.08" width="167.5" height="0.6" fill="#4a4a4a"/><rect x="836.3" y="671.40" width="0.5" height="10.68" fill="#4a4a4a"/><rect x="972.3" y="671.40" width="0.5" height="10.68" fill="#4a4a4a"/><path d="M827.8,677.04 C829.5,674.44 832.5,674.44 834.2,677.04 C832.5,679.64 829.5,679.64 827.8,677.04 Z" fill="#b8b8b8"/><ellipse cx="831" cy="677.04" rx="1.5" ry="1.1" fill="#6a6a6a"/><rect x="848.4" y="671.90" width="1.7" height="10.08" fill="#4a6ef0"/><rect x="876.60" y="671.94" width="10.30" height="10.20" fill="#222"/><rect x="877.00" y="672.34" width="9.5" height="9.4" fill="#ffffff"/><rect x="877.00" y="672.34" width="9.5" height="9.4" fill="#c8bab1"/><rect x="877.00" y="672.34" width="9.5" height="1.2" fill="#eeeeee"/><rect x="877.00" y="680.54" width="9.5" height="1.2" fill="#eeeeee"/><text x="889.5" y="678.74" font-size="5.3" fill="#d2d2d2">&lt;Rectangle&gt;</text><circle cx="978.3" cy="677.04" r="1.8" fill="none" stroke="#c0c0c0" stroke-width="0.7"/><rect x="825" y="693.36" width="167.5" height="0.6" fill="#4a4a4a"/><rect x="836.3" y="682.68" width="0.5" height="10.68" fill="#4a4a4a"/><rect x="972.3" y="682.68" width="0.5" height="10.68" fill="#4a4a4a"/><path d="M827.8,688.32 C829.5,685.72 832.5,685.72 834.2,688.32 C832.5,690.92 829.5,690.92 827.8,688.32 Z" fill="#b8b8b8"/><ellipse cx="831" cy="688.32" rx="1.5" ry="1.1" fill="#6a6a6a"/><rect x="848.4" y="683.18" width="1.7" height="10.08" fill="#4a6ef0"/><rect x="876.60" y="683.22" width="10.30" height="10.20" fill="#222"/><rect x="877.00" y="683.62" width="9.5" height="9.4" fill="#ffffff"/><rect x="877.00" y="684.62" width="9.5" height="0.8" fill="#111111"/><rect x="877.00" y="691.02" width="9.5" height="0.8" fill="#111111"/><text x="889.5" y="690.02" font-size="5.3" fill="#d2d2d2">Bleed</text><circle cx="978.3" cy="688.32" r="1.8" fill="#9a9a9a" stroke="#c0c0c0" stroke-width="0.6"/><text x="825" y="832.8" font-size="5.2" fill="#c8c8c8">2 Layers</text><path d="M892,826 v7 M891,827 h7 M897,825.5 v7 M891,832 h5" stroke="#c0c0c0" stroke-width="0.7" fill="none"/><rect x="896" y="829.5" width="2.5" height="3.5" fill="#c0c0c0"/><path d="M909,826.5 h-4.3 v6.5 h6.5 v-4" fill="none" stroke="#c0c0c0" stroke-width="0.8"/><path d="M907.5,830 L911.5,826 M909.5,825.7 h2.2 v2.2" fill="none" stroke="#c0c0c0" stroke-width="0.8"/><circle cx="920.5" cy="828.8" r="2" fill="none" stroke="#7a7a7a" stroke-width="0.7"/><path d="M922,830.3 L923.8,832" stroke="#7a7a7a" stroke-width="0.8"/><rect x="932.7" y="826" width="5" height="5" fill="#c0c0c0"/><rect x="934.5" y="828" width="4.5" height="4.8" fill="none" stroke="#c0c0c0" stroke-width="0.6"/><path d="M945.8,826 v3.5 h2" fill="none" stroke="#c0c0c0" stroke-width="0.7"/><rect x="947.5" y="826.5" width="5.5" height="6" fill="none" stroke="#c0c0c0" stroke-width="0.7"/><path d="M950.2,826.5 v6 M947.5,829.5 h5.5" stroke="#c0c0c0" stroke-width="0.5"/><rect x="960.3" y="826.3" width="6" height="6" rx="0.6" fill="none" stroke="#c0c0c0" stroke-width="0.8"/><path d="M963.3,827.8 v3 M961.8,829.3 h3" stroke="#c0c0c0" stroke-width="0.7"/><path d="M974.5,827 h5 M975,827 v5.5 h4 v-5.5 M976.2,826 h1.6" fill="none" stroke="#c0c0c0" stroke-width="0.7"/><path d="M976.2,828 v3.3 M977.8,828 v3.3" stroke="#c0c0c0" stroke-width="0.4"/><rect x="821.8" y="835" width="173.4" height="1.4" fill="#333"/><rect x="821.8" y="836.4" width="173.4" height="3" fill="#4a4a4a"/><path d="M902,837.8 h10" stroke="#3a3a3a" stroke-width="0.8" stroke-dasharray="1,0.8"/>
</svg></body></html>
